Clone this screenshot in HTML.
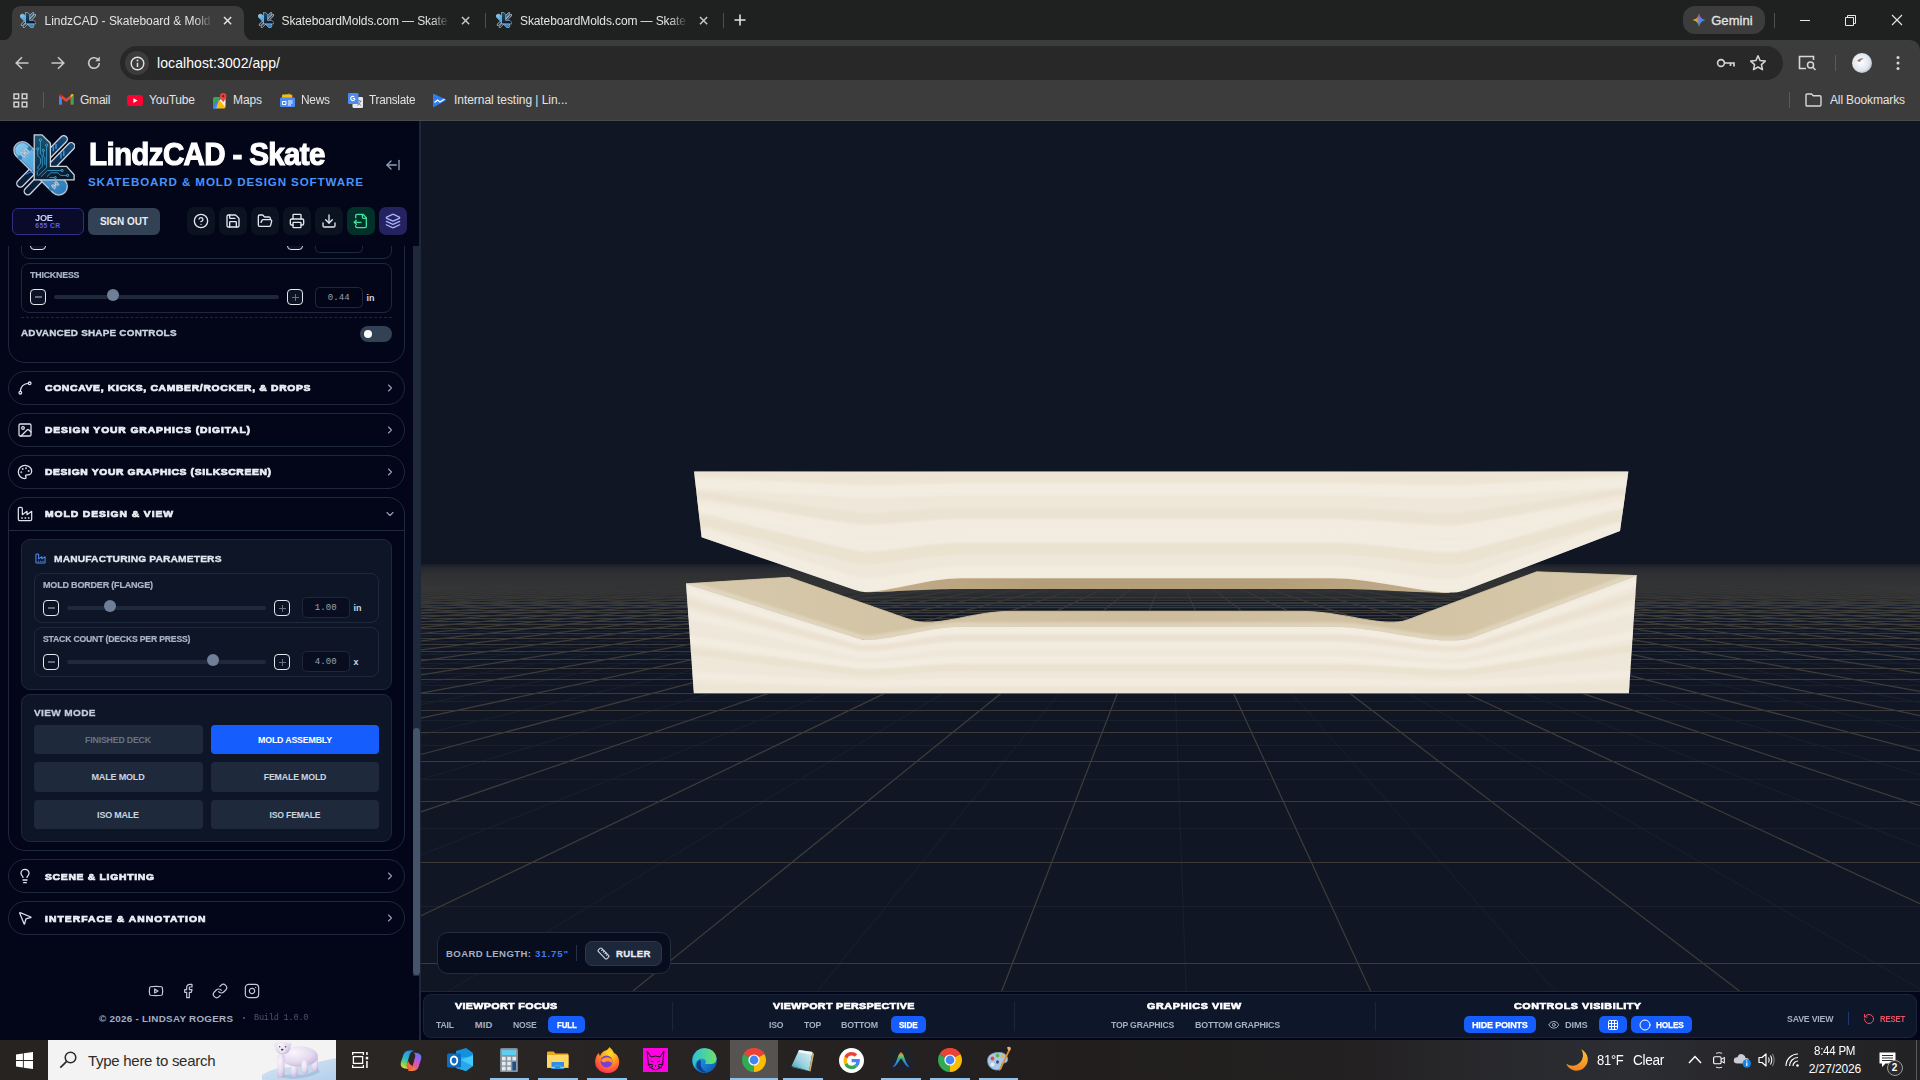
<!DOCTYPE html>
<html lang="en"><head><meta charset="utf-8"><title>LindzCAD - Skateboard &amp; Mold Design</title>
<style>
*{box-sizing:border-box;margin:0;padding:0}
html,body{width:1920px;height:1080px;overflow:hidden;background:#101624;font-family:"Liberation Sans",sans-serif}
.b{position:absolute;display:block}
.t{position:absolute;white-space:nowrap;display:block}
#root{position:relative;width:1920px;height:1080px;overflow:hidden}
</style></head>
<body><div id="root">
<div class="b" style="left:421px;top:120px;width:1499px;height:871px;background:#101624;"></div>
<svg class="b" style="left:0;top:0" width="1920" height="1080" viewBox="0 0 1920 1080"><defs><linearGradient id="haze" x1="0" y1="0" x2="0" y2="1"><stop offset="0" stop-color="#101624" stop-opacity=".8"/><stop offset=".08" stop-color="#101624" stop-opacity=".5"/><stop offset=".22" stop-color="#101624" stop-opacity=".3"/><stop offset=".5" stop-color="#101624" stop-opacity=".18"/><stop offset="1" stop-color="#101624" stop-opacity="0"/></linearGradient><linearGradient id="tanL" x1="0" y1="0" x2="1" y2="0"><stop offset="0" stop-color="#d6c8ab"/><stop offset=".22" stop-color="#d3c4a5"/><stop offset=".5" stop-color="#cdbd9e"/><stop offset=".78" stop-color="#d3c4a5"/><stop offset="1" stop-color="#d6c8ab"/></linearGradient><linearGradient id="tanU" x1="0" y1="0" x2="1" y2="0"><stop offset="0" stop-color="#c4ad8a"/><stop offset=".3" stop-color="#b59e7a"/><stop offset=".7" stop-color="#b59e7a"/><stop offset="1" stop-color="#c4ad8a"/></linearGradient><filter id="bl" x="-2%" y="-10%" width="104%" height="120%"><feGaussianBlur stdDeviation="1.3"/></filter><clipPath id="cU"><path d="M694 471.6L1628.4 471.6L1620 531.1 L1620 531.1 L1466 590 C1460 592.3 1455 592.6 1449 592.6 C1420 592 1370 578.2 1332 578.2 L961 578.2 C930 578.2 890 591.5 866 591.9 C861 591.9 858 591 852 588.9 L701.6 537.3 Z"/></clipPath><clipPath id="cL"><path d="M686 583.8 L852 636.6 C858 638.5 861 640 866 640 C890 640 930 626.7 961 626.7 L1334 626.7 C1370 626.7 1420 640.5 1449 640.5 C1458 640.5 1465 640.4 1472 637.8 L1636.7 575.6 L1628.9 693.3L693.8 693.3Z"/></clipPath></defs><path d="M421 906.5H1920M421 828.5H1920M421 779.5H1920M421 745.5H1920M421 720.5H1920M421 701.5H1920M421 685.5H1920M421 673.5H1920M421 663.5H1920M421 654.5H1920M421 647.5H1920M421 641.5H1920M421 635.5H1920M421 631.5H1920M421 626.5H1920M421 623.5H1920M421 619.5H1920M421 616.5H1920M421 613.5H1920M421 611.5H1920M421 608.5H1920M421 606.5H1920M421 604.5H1920M421 602.5H1920M421 601.2H1920M421 599.7H1920M421 598.2H1920M421 596.8H1920M421 595.6H1920M421 594.4H1920M421 593.2H1920M421 592.2H1920M421 591.1H1920M421 590.2H1920M421 589.3H1920M421 588.4H1920M421 587.6H1920M421 586.9H1920M421 586.1H1920M421 585.4H1920M421 584.8H1920M421 584.1H1920M421 583.5H1920M421 582.9H1920M421 582.4H1920M421 581.8H1920M421 581.3H1920M421 580.8H1920M421 580.4H1920M421 579.9H1920M421 579.5H1920M421 579H1920M421 578.6H1920M421 578.2H1920M421 577.9H1920M421 577.5H1920M421 577.1H1920M421 576.8H1920M421 576.5H1920M421 576.1H1920M421 575.8H1920M421 575.5H1920M421 575.2H1920M421 575H1920M421 574.7H1920M421 574.4H1920M421 574.2H1920M421 573.9H1920M421 573.7H1920M421 573.4H1920M421 573.2H1920M421 573H1920M421 572.7H1920M421 572.5H1920M421 572.3H1920M421 572.1H1920M421 571.9H1920M421 571.7H1920M421 571.5H1920M421 571.4H1920M421 571.2H1920M421 571H1920M421 570.8H1920M421 570.7H1920M421 570.5H1920M421 570.3H1920M421 570.2H1920M421 570H1920M421 569.9H1920M421 569.7H1920M421 569.6H1920M421 569.5H1920M421 569.3H1920M421 569.2H1920M421 569.1H1920M421 568.9H1920M421 568.8H1920M421 568.7H1920M421 568.6H1920M421 568.4H1920M421 568.3H1920M421 568.2H1920M421 568.1H1920M421 568H1920M421 567.9H1920M421 567.8H1920M421 567.7H1920M421 567.6H1920M421 567.5H1920M421 567.4H1920M421 567.3H1920M421 567.2H1920M421 567.1H1920M421 567H1920M421 566.9H1920M421 566.8H1920M421 566.7H1920M421 566.6H1920M421 566.6H1920M421 566.5H1920M421 566.4H1920M421 566.3H1920M421 566.2H1920M421 566.2H1920M421 566.1H1920M421 566H1920M421 565.9H1920M421 565.9H1920M421 565.8H1920M421 565.7H1920M421 565.6H1920M421 565.6H1920M421 565.5H1920M421 565.4H1920M421 565.4H1920M421 565.3H1920M421 565.2H1920M421 565.2H1920M421 565.1H1920M421 565.1H1920M421 565H1920M421 564.9H1920M421 564.9H1920M421 564.8H1920M421 564.8H1920M421 564.7H1920M424.1 564.7L421 564.7M431.2 564.7L421 564.8M438.2 564.7L421 564.9M445.2 564.7L421 565M452.3 564.7L421 565.1M459.3 564.7L421 565.1M466.4 564.7L421 565.2M473.4 564.7L421 565.3M480.5 564.7L421 565.4M487.5 564.7L421 565.5M494.6 564.7L421 565.6M501.6 564.7L421 565.7M508.6 564.7L421 565.8M515.7 564.7L421 565.9M522.7 564.7L421 566M529.8 564.7L421 566.1M536.8 564.7L421 566.2M543.9 564.7L421 566.3M550.9 564.7L421 566.4M558 564.7L421 566.6M565 564.7L421 566.7M572 564.7L421 566.8M579.1 564.7L421 566.9M586.1 564.7L421 567M593.2 564.7L421 567.2M600.2 564.7L421 567.3M607.3 564.7L421 567.4M614.3 564.7L421 567.6M621.4 564.7L421 567.7M628.4 564.7L421 567.9M635.4 564.7L421 568M642.5 564.7L421 568.2M649.5 564.7L421 568.3M656.6 564.7L421 568.5M663.6 564.7L421 568.7M670.7 564.7L421 568.8M677.7 564.7L421 569M684.7 564.7L421 569.2M691.8 564.7L421 569.4M698.8 564.7L421 569.6M705.9 564.7L421 569.8M712.9 564.7L421 570M720 564.7L421 570.2M727 564.7L421 570.4M734.1 564.7L421 570.7M741.1 564.7L421 570.9M748.1 564.7L421 571.1M755.2 564.7L421 571.4M762.2 564.7L421 571.6M769.3 564.7L421 571.9M776.3 564.7L421 572.2M783.4 564.7L421 572.5M790.4 564.7L421 572.8M797.5 564.7L421 573.1M804.5 564.7L421 573.4M811.5 564.7L421 573.7M818.6 564.7L421 574.1M825.6 564.7L421 574.4M832.7 564.7L421 574.8M839.7 564.7L421 575.2M846.8 564.7L421 575.6M853.8 564.7L421 576M860.9 564.7L421 576.5M867.9 564.7L421 577M874.9 564.7L421 577.4M882 564.7L421 578M889 564.7L421 578.5M896.1 564.7L421 579.1M903.1 564.7L421 579.7M910.2 564.7L421 580.3M917.2 564.7L421 581M924.3 564.7L421 581.7M931.3 564.7L421 582.4M938.3 564.7L421 583.2M945.4 564.7L421 584M952.4 564.7L421 584.9M959.5 564.7L421 585.9M966.5 564.7L421 586.9M973.6 564.7L421 588M980.6 564.7L421 589.2M987.6 564.7L421 590.4M994.7 564.7L421 591.8M1001.7 564.7L421 593.3M1008.8 564.7L421 594.9M1015.8 564.7L421 596.6M1022.9 564.7L421 598.5M1029.9 564.7L421 600.6M1037 564.7L421 603M1044 564.7L421 605.6M1051 564.7L421 608.5M1058.1 564.7L421 611.7M1065.1 564.7L421 615.4M1072.2 564.7L421 619.7M1079.2 564.7L421 624.6M1086.3 564.7L421 630.3M1093.3 564.7L421 637M1100.4 564.7L421 645.1M1107.4 564.7L421 655M1114.4 564.7L421 667.4M1121.5 564.7L421 683.3M1128.5 564.7L421 704.6M1135.6 564.7L421 734.5M1142.6 564.7L421 779.5M1149.7 564.7L421 855M1156.7 564.7L448.5 991M1163.8 564.7L817.3 991M1170.8 564.7L1186.1 991M1177.8 564.7L1555 991M1184.9 564.7L1920 988.8M1191.9 564.7L1920 846.7M1199 564.7L1920 774.9M1206 564.7L1920 731.5M1213.1 564.7L1920 702.6M1220.1 564.7L1920 681.8M1227.2 564.7L1920 666.2M1234.2 564.7L1920 654.1M1241.2 564.7L1920 644.3M1248.3 564.7L1920 636.4M1255.3 564.7L1920 629.7M1262.4 564.7L1920 624.1M1269.4 564.7L1920 619.3M1276.5 564.7L1920 615.1M1283.5 564.7L1920 611.4M1290.6 564.7L1920 608.2M1297.6 564.7L1920 605.3M1304.6 564.7L1920 602.8M1311.7 564.7L1920 600.5M1318.7 564.7L1920 598.4M1325.8 564.7L1920 596.5M1332.8 564.7L1920 594.7M1339.9 564.7L1920 593.1M1346.9 564.7L1920 591.7M1353.9 564.7L1920 590.3M1361 564.7L1920 589.1M1368 564.7L1920 587.9M1375.1 564.7L1920 586.8M1382.1 564.7L1920 585.8M1389.2 564.7L1920 584.8M1396.2 564.7L1920 584M1403.3 564.7L1920 583.1M1410.3 564.7L1920 582.3M1417.3 564.7L1920 581.6M1424.4 564.7L1920 580.9M1431.4 564.7L1920 580.2M1438.5 564.7L1920 579.6M1445.5 564.7L1920 579M1452.6 564.7L1920 578.5M1459.6 564.7L1920 577.9M1466.7 564.7L1920 577.4M1473.7 564.7L1920 576.9M1480.7 564.7L1920 576.5M1487.8 564.7L1920 576M1494.8 564.7L1920 575.6M1501.9 564.7L1920 575.2M1508.9 564.7L1920 574.8M1516 564.7L1920 574.4M1523 564.7L1920 574M1530.1 564.7L1920 573.7M1537.1 564.7L1920 573.4M1544.1 564.7L1920 573M1551.2 564.7L1920 572.7M1558.2 564.7L1920 572.4M1565.3 564.7L1920 572.2M1572.3 564.7L1920 571.9M1579.4 564.7L1920 571.6M1586.4 564.7L1920 571.4M1593.5 564.7L1920 571.1M1600.5 564.7L1920 570.9M1607.5 564.7L1920 570.6M1614.6 564.7L1920 570.4M1621.6 564.7L1920 570.2M1628.7 564.7L1920 570M1635.7 564.7L1920 569.8M1642.8 564.7L1920 569.6M1649.8 564.7L1920 569.4M1656.8 564.7L1920 569.2M1663.9 564.7L1920 569M1670.9 564.7L1920 568.8M1678 564.7L1920 568.7M1685 564.7L1920 568.5M1692.1 564.7L1920 568.3M1699.1 564.7L1920 568.2M1706.2 564.7L1920 568M1713.2 564.7L1920 567.9M1720.2 564.7L1920 567.7M1727.3 564.7L1920 567.6M1734.3 564.7L1920 567.4M1741.4 564.7L1920 567.3M1748.4 564.7L1920 567.2M1755.5 564.7L1920 567M1762.5 564.7L1920 566.9M1769.6 564.7L1920 566.8M1776.6 564.7L1920 566.7M1783.6 564.7L1920 566.5M1790.7 564.7L1920 566.4M1797.7 564.7L1920 566.3M1804.8 564.7L1920 566.2M1811.8 564.7L1920 566.1M1818.9 564.7L1920 566M1825.9 564.7L1920 565.9M1833 564.7L1920 565.8M1840 564.7L1920 565.7M1847 564.7L1920 565.6M1854.1 564.7L1920 565.5M1861.1 564.7L1920 565.4M1868.2 564.7L1920 565.3M1875.2 564.7L1920 565.2M1882.3 564.7L1920 565.1M1889.3 564.7L1920 565.1M1896.4 564.7L1920 565M1903.4 564.7L1920 564.9M1910.4 564.7L1920 564.8M1917.5 564.7L1920 564.7" stroke="#1a212d" stroke-width="1" fill="none"/><path d="M421 963.5H1920M421 862.5H1920M421 801.5H1920M421 761.5H1920M421 732.5H1920M421 710.5H1920M421 693.5H1920M421 679.5H1920M421 668.5H1920M421 659.5H1920M421 651.5H1920M421 644.5H1920M421 638.5H1920M421 633.5H1920M421 628.5H1920M421 624.5H1920M421 621.5H1920M421 618.5H1920M421 615.5H1920M421 612.5H1920M421 610.5H1920M421 607.5H1920M421 605.5H1920M421 603.5H1920M421 602.5H1920M421 600.4H1920M421 598.9H1920M421 597.5H1920M421 596.2H1920M421 594.9H1920M421 593.8H1920M421 592.7H1920M421 591.6H1920M421 590.7H1920M421 589.7H1920M421 588.9H1920M421 588H1920M421 587.2H1920M421 586.5H1920M421 585.8H1920M421 585.1H1920M421 584.4H1920M421 583.8H1920M421 583.2H1920M421 582.7H1920M421 582.1H1920M421 581.6H1920M421 581.1H1920M421 580.6H1920M421 580.1H1920M421 579.7H1920M421 579.3H1920M421 578.8H1920M421 578.4H1920M421 578H1920M421 577.7H1920M421 577.3H1920M421 577H1920M421 576.6H1920M421 576.3H1920M421 576H1920M421 575.7H1920M421 575.4H1920M421 575.1H1920M421 574.8H1920M421 574.5H1920M421 574.3H1920M421 574H1920M421 573.8H1920M421 573.5H1920M421 573.3H1920M421 573.1H1920M421 572.9H1920M421 572.6H1920M421 572.4H1920M421 572.2H1920M421 572H1920M421 571.8H1920M421 571.6H1920M421 571.5H1920M421 571.3H1920M421 571.1H1920M421 570.9H1920M421 570.8H1920M421 570.6H1920M421 570.4H1920M421 570.3H1920M421 570.1H1920M421 570H1920M421 569.8H1920M421 569.7H1920M421 569.5H1920M421 569.4H1920M421 569.3H1920M421 569.1H1920M421 569H1920M421 568.9H1920M421 568.7H1920M421 568.6H1920M421 568.5H1920M421 568.4H1920M421 568.3H1920M421 568.2H1920M421 568H1920M421 567.9H1920M421 567.8H1920M421 567.7H1920M421 567.6H1920M421 567.5H1920M421 567.4H1920M421 567.3H1920M421 567.2H1920M421 567.1H1920M421 567H1920M421 566.9H1920M421 566.9H1920M421 566.8H1920M421 566.7H1920M421 566.6H1920M421 566.5H1920M421 566.4H1920M421 566.4H1920M421 566.3H1920M421 566.2H1920M421 566.1H1920M421 566H1920M421 566H1920M421 565.9H1920M421 565.8H1920M421 565.8H1920M421 565.7H1920M421 565.6H1920M421 565.5H1920M421 565.5H1920M421 565.4H1920M421 565.3H1920M421 565.3H1920M421 565.2H1920M421 565.2H1920M421 565.1H1920M421 565H1920M421 565H1920M421 564.9H1920M421 564.9H1920M421 564.8H1920M421 564.7H1920" stroke="#3b3a38" stroke-width="1" fill="none"/><path d="M420.6 564.7L421 564.7M427.6 564.7L421 564.8M434.7 564.7L421 564.9M441.7 564.7L421 564.9M448.8 564.7L421 565M455.8 564.7L421 565.1M462.9 564.7L421 565.2M469.9 564.7L421 565.3M476.9 564.7L421 565.4M484 564.7L421 565.5M491 564.7L421 565.6M498.1 564.7L421 565.7M505.1 564.7L421 565.7M512.2 564.7L421 565.8M519.2 564.7L421 566M526.3 564.7L421 566.1M533.3 564.7L421 566.2M540.3 564.7L421 566.3M547.4 564.7L421 566.4M554.4 564.7L421 566.5M561.5 564.7L421 566.6M568.5 564.7L421 566.7M575.6 564.7L421 566.9M582.6 564.7L421 567M589.7 564.7L421 567.1M596.7 564.7L421 567.2M603.7 564.7L421 567.4M610.8 564.7L421 567.5M617.8 564.7L421 567.7M624.9 564.7L421 567.8M631.9 564.7L421 568M639 564.7L421 568.1M646 564.7L421 568.3M653 564.7L421 568.4M660.1 564.7L421 568.6M667.1 564.7L421 568.8M674.2 564.7L421 568.9M681.2 564.7L421 569.1M688.3 564.7L421 569.3M695.3 564.7L421 569.5M702.4 564.7L421 569.7M709.4 564.7L421 569.9M716.4 564.7L421 570.1M723.5 564.7L421 570.3M730.5 564.7L421 570.5M737.6 564.7L421 570.8M744.6 564.7L421 571M751.7 564.7L421 571.3M758.7 564.7L421 571.5M765.8 564.7L421 571.8M772.8 564.7L421 572M779.8 564.7L421 572.3M786.9 564.7L421 572.6M793.9 564.7L421 572.9M801 564.7L421 573.2M808 564.7L421 573.6M815.1 564.7L421 573.9M822.1 564.7L421 574.3M829.2 564.7L421 574.6M836.2 564.7L421 575M843.2 564.7L421 575.4M850.3 564.7L421 575.8M857.3 564.7L421 576.3M864.4 564.7L421 576.7M871.4 564.7L421 577.2M878.5 564.7L421 577.7M885.5 564.7L421 578.2M892.6 564.7L421 578.8M899.6 564.7L421 579.4M906.6 564.7L421 580M913.7 564.7L421 580.6M920.7 564.7L421 581.3M927.8 564.7L421 582M934.8 564.7L421 582.8M941.9 564.7L421 583.6M948.9 564.7L421 584.5M956 564.7L421 585.4M963 564.7L421 586.4M970 564.7L421 587.4M977.1 564.7L421 588.6M984.1 564.7L421 589.8M991.2 564.7L421 591.1M998.2 564.7L421 592.5M1005.3 564.7L421 594M1012.3 564.7L421 595.7M1019.3 564.7L421 597.6M1026.4 564.7L421 599.6M1033.4 564.7L421 601.8M1040.5 564.7L421 604.2M1047.5 564.7L421 607M1054.6 564.7L421 610.1M1061.6 564.7L421 613.5M1068.7 564.7L421 617.5M1075.7 564.7L421 622M1082.7 564.7L421 627.3M1089.8 564.7L421 633.5M1096.8 564.7L421 640.8M1103.9 564.7L421 649.8M1110.9 564.7L421 660.8M1118 564.7L421 674.8M1125 564.7L421 693.2M1132.1 564.7L421 718.2M1139.1 564.7L421 754.5M1146.1 564.7L421 811.8M1153.2 564.7L421 915.7M1160.2 564.7L632.9 991M1167.3 564.7L1001.7 991M1174.3 564.7L1370.6 991M1181.4 564.7L1739.4 991M1188.4 564.7L1920 903.8M1195.5 564.7L1920 805.7M1202.5 564.7L1920 750.8M1209.5 564.7L1920 715.7M1216.6 564.7L1920 691.4M1223.6 564.7L1920 673.5M1230.7 564.7L1920 659.8M1237.7 564.7L1920 648.9M1244.8 564.7L1920 640.2M1251.8 564.7L1920 632.9M1258.9 564.7L1920 626.8M1265.9 564.7L1920 621.6M1272.9 564.7L1920 617.1M1280 564.7L1920 613.2M1287 564.7L1920 609.8M1294.1 564.7L1920 606.7M1301.1 564.7L1920 604M1308.2 564.7L1920 601.6M1315.2 564.7L1920 599.4M1322.2 564.7L1920 597.4M1329.3 564.7L1920 595.6M1336.3 564.7L1920 593.9M1343.4 564.7L1920 592.4M1350.4 564.7L1920 591M1357.5 564.7L1920 589.7M1364.5 564.7L1920 588.5M1371.6 564.7L1920 587.3M1378.6 564.7L1920 586.3M1385.6 564.7L1920 585.3M1392.7 564.7L1920 584.4M1399.7 564.7L1920 583.5M1406.8 564.7L1920 582.7M1413.8 564.7L1920 582M1420.9 564.7L1920 581.2M1427.9 564.7L1920 580.6M1435 564.7L1920 579.9M1442 564.7L1920 579.3M1449 564.7L1920 578.7M1456.1 564.7L1920 578.2M1463.1 564.7L1920 577.7M1470.2 564.7L1920 577.2M1477.2 564.7L1920 576.7M1484.3 564.7L1920 576.2M1491.3 564.7L1920 575.8M1498.4 564.7L1920 575.4M1505.4 564.7L1920 575M1512.4 564.7L1920 574.6M1519.5 564.7L1920 574.2M1526.5 564.7L1920 573.9M1533.6 564.7L1920 573.5M1540.6 564.7L1920 573.2M1547.7 564.7L1920 572.9M1554.7 564.7L1920 572.6M1561.8 564.7L1920 572.3M1568.8 564.7L1920 572M1575.8 564.7L1920 571.7M1582.9 564.7L1920 571.5M1589.9 564.7L1920 571.2M1597 564.7L1920 571M1604 564.7L1920 570.7M1611.1 564.7L1920 570.5M1618.1 564.7L1920 570.3M1625.2 564.7L1920 570.1M1632.2 564.7L1920 569.9M1639.2 564.7L1920 569.7M1646.3 564.7L1920 569.5M1653.3 564.7L1920 569.3M1660.4 564.7L1920 569.1M1667.4 564.7L1920 568.9M1674.5 564.7L1920 568.7M1681.5 564.7L1920 568.6M1688.5 564.7L1920 568.4M1695.6 564.7L1920 568.2M1702.6 564.7L1920 568.1M1709.7 564.7L1920 567.9M1716.7 564.7L1920 567.8M1723.8 564.7L1920 567.6M1730.8 564.7L1920 567.5M1737.9 564.7L1920 567.4M1744.9 564.7L1920 567.2M1751.9 564.7L1920 567.1M1759 564.7L1920 567M1766 564.7L1920 566.8M1773.1 564.7L1920 566.7M1780.1 564.7L1920 566.6M1787.2 564.7L1920 566.5M1794.2 564.7L1920 566.4M1801.3 564.7L1920 566.3M1808.3 564.7L1920 566.2M1815.3 564.7L1920 566M1822.4 564.7L1920 565.9M1829.4 564.7L1920 565.8M1836.5 564.7L1920 565.7M1843.5 564.7L1920 565.6M1850.6 564.7L1920 565.5M1857.6 564.7L1920 565.5M1864.7 564.7L1920 565.4M1871.7 564.7L1920 565.3M1878.7 564.7L1920 565.2M1885.8 564.7L1920 565.1M1892.8 564.7L1920 565M1899.9 564.7L1920 564.9M1906.9 564.7L1920 564.8M1914 564.7L1920 564.8M1921 564.7L1920 564.7" stroke="#3d3c39" stroke-width="1.25" fill="none"/><rect x="421" y="564" width="1499" height="50" fill="url(#haze)"/><path d="M686 583.8L788.9 577.3 L910 619.7 C917 622.1 922 622.2 928.5 622.2 C950 622.2 980 611.4 1009 611.4 L1303 611.4 C1335 611.4 1368 622.2 1390 622.2 C1396 622.2 1401 622.2 1408 619.7 L1536.7 571.8 L1636.7 575.6 L1636.7 575.6 L1472 637.8 C1465 640.4 1458 640.5 1449 640.5 C1420 640.5 1370 626.7 1334 626.7 L961 626.7 C930 626.7 890 640 866 640 C861 640 858 638.5 852 636.6 L686 583.8 Z" fill="url(#tanL)" stroke="#d3c4a6" stroke-width=".9"/><clipPath id="cT"><path d="M686 583.8L788.9 577.3 L910 619.7 C917 622.1 922 622.2 928.5 622.2 C950 622.2 980 611.4 1009 611.4 L1303 611.4 C1335 611.4 1368 622.2 1390 622.2 C1396 622.2 1401 622.2 1408 619.7 L1536.7 571.8 L1636.7 575.6 L1636.7 575.6 L1472 637.8 C1465 640.4 1458 640.5 1449 640.5 C1420 640.5 1370 626.7 1334 626.7 L961 626.7 C930 626.7 890 640 866 640 C861 640 858 638.5 852 636.6 L686 583.8 Z"/></clipPath><g clip-path="url(#cT)"><path d="M686 583.8 L852 636.6 C858 638.5 861 640 866 640 C890 640 930 626.7 961 626.7 L1334 626.7 C1370 626.7 1420 640.5 1449 640.5 C1458 640.5 1465 640.4 1472 637.8 L1636.7 575.6" stroke="#e9e0cc" stroke-opacity=".55" stroke-width="9" fill="none" filter="url(#bl)"/></g><path d="M686 583.8 L852 636.6 C858 638.5 861 640 866 640 C890 640 930 626.7 961 626.7 L1334 626.7 C1370 626.7 1420 640.5 1449 640.5 C1458 640.5 1465 640.4 1472 637.8 L1636.7 575.6 L1628.9 693.3L693.8 693.3Z" fill="#efe8da"/><g clip-path="url(#cL)"><g filter="url(#bl)"><path d="M686 589.9L701.8 594.6L717.7 599.4L733.5 604.2L749.4 608.9L765.2 613.7L781.1 618.4L796.9 623.2L812.8 628L828.6 632.7L844.5 637.5L860.3 642.3L876.1 642.4L892 640.1L907.8 637.2L923.7 634.4L939.5 632L955.4 630.6L971.2 630.4L987.1 630.4L1002.9 630.4L1018.7 630.4L1034.6 630.4L1050.4 630.4L1066.3 630.4L1082.1 630.4L1098 630.4L1113.8 630.4L1129.7 630.4L1145.5 630.4L1161.3 630.4L1177.2 630.4L1193 630.4L1208.9 630.4L1224.7 630.4L1240.6 630.4L1256.4 630.4L1272.3 630.4L1288.1 630.4L1304 630.4L1319.8 630.4L1335.6 630.4L1351.5 631.2L1367.3 633L1383.2 635.2L1399 637.7L1414.9 640.1L1430.7 642.2L1446.6 643.4L1462.4 643L1478.2 638.7L1494.1 633L1509.9 627.4L1525.8 621.7L1541.6 616L1557.5 610.4L1573.3 604.7L1589.2 599.1L1605 593.4L1620.9 587.8L1636.7 582.1" stroke="#f6f0e6" stroke-opacity="0.55" stroke-width="7.4" fill="none"/><path d="M686 602L701.8 606.2L717.7 610.4L733.5 614.6L749.4 618.8L765.2 623L781.1 627.2L796.9 631.4L812.8 635.6L828.6 639.8L844.5 644L860.3 648.3L876.1 648.4L892 646.4L907.8 643.8L923.7 641.3L939.5 639.2L955.4 637.9L971.2 637.8L987.1 637.8L1002.9 637.8L1018.7 637.8L1034.6 637.8L1050.4 637.8L1066.3 637.8L1082.1 637.8L1098 637.8L1113.8 637.8L1129.7 637.8L1145.5 637.8L1161.3 637.8L1177.2 637.8L1193 637.8L1208.9 637.8L1224.7 637.8L1240.6 637.8L1256.4 637.8L1272.3 637.8L1288.1 637.8L1304 637.8L1319.8 637.8L1335.6 637.8L1351.5 638.5L1367.3 640.1L1383.2 642.1L1399 644.2L1414.9 646.4L1430.7 648.2L1446.6 649.2L1462.4 648.9L1478.2 645.1L1494.1 640.1L1509.9 635.1L1525.8 630.1L1541.6 625.1L1557.5 620.1L1573.3 615.2L1589.2 610.2L1605 605.2L1620.9 600.2L1636.7 595.2" stroke="#e9dfcc" stroke-opacity="0.55" stroke-width="7.4" fill="none"/><path d="M686 614.2L701.8 617.9L717.7 621.5L733.5 625.1L749.4 628.8L765.2 632.4L781.1 636.1L796.9 639.7L812.8 643.3L828.6 647L844.5 650.6L860.3 654.3L876.1 654.3L892 652.6L907.8 650.4L923.7 648.2L939.5 646.4L955.4 645.3L971.2 645.2L987.1 645.2L1002.9 645.2L1018.7 645.2L1034.6 645.2L1050.4 645.2L1066.3 645.2L1082.1 645.2L1098 645.2L1113.8 645.2L1129.7 645.2L1145.5 645.2L1161.3 645.2L1177.2 645.2L1193 645.2L1208.9 645.2L1224.7 645.2L1240.6 645.2L1256.4 645.2L1272.3 645.2L1288.1 645.2L1304 645.2L1319.8 645.2L1335.6 645.2L1351.5 645.8L1367.3 647.2L1383.2 648.9L1399 650.8L1414.9 652.6L1430.7 654.2L1446.6 655.1L1462.4 654.8L1478.2 651.5L1494.1 647.2L1509.9 642.9L1525.8 638.5L1541.6 634.2L1557.5 629.9L1573.3 625.6L1589.2 621.3L1605 616.9L1620.9 612.6L1636.7 608.3" stroke="#f4eee3" stroke-opacity="0.55" stroke-width="7.4" fill="none"/><path d="M686 638.5L701.8 641.1L717.7 643.6L733.5 646.1L749.4 648.6L765.2 651.1L781.1 653.7L796.9 656.2L812.8 658.7L828.6 661.2L844.5 663.7L860.3 666.3L876.1 666.3L892 665.1L907.8 663.6L923.7 662.1L939.5 660.8L955.4 660.1L971.2 660L987.1 660L1002.9 660L1018.7 660L1034.6 660L1050.4 660L1066.3 660L1082.1 660L1098 660L1113.8 660L1129.7 660L1145.5 660L1161.3 660L1177.2 660L1193 660L1208.9 660L1224.7 660L1240.6 660L1256.4 660L1272.3 660L1288.1 660L1304 660L1319.8 660L1335.6 660L1351.5 660.4L1367.3 661.4L1383.2 662.6L1399 663.9L1414.9 665.1L1430.7 666.3L1446.6 666.9L1462.4 666.7L1478.2 664.4L1494.1 661.4L1509.9 658.4L1525.8 655.4L1541.6 652.4L1557.5 649.4L1573.3 646.4L1589.2 643.4L1605 640.4L1620.9 637.4L1636.7 634.5" stroke="#f6f0e6" stroke-opacity="0.55" stroke-width="7.4" fill="none"/><path d="M686 650.7L701.8 652.7L717.7 654.6L733.5 656.6L749.4 658.6L765.2 660.5L781.1 662.5L796.9 664.4L812.8 666.4L828.6 668.4L844.5 670.3L860.3 672.3L876.1 672.3L892 671.4L907.8 670.2L923.7 669L939.5 668L955.4 667.5L971.2 667.4L987.1 667.4L1002.9 667.4L1018.7 667.4L1034.6 667.4L1050.4 667.4L1066.3 667.4L1082.1 667.4L1098 667.4L1113.8 667.4L1129.7 667.4L1145.5 667.4L1161.3 667.4L1177.2 667.4L1193 667.4L1208.9 667.4L1224.7 667.4L1240.6 667.4L1256.4 667.4L1272.3 667.4L1288.1 667.4L1304 667.4L1319.8 667.4L1335.6 667.4L1351.5 667.7L1367.3 668.5L1383.2 669.4L1399 670.4L1414.9 671.4L1430.7 672.3L1446.6 672.7L1462.4 672.6L1478.2 670.8L1494.1 668.5L1509.9 666.1L1525.8 663.8L1541.6 661.5L1557.5 659.2L1573.3 656.8L1589.2 654.5L1605 652.2L1620.9 649.9L1636.7 647.5" stroke="#e8dec9" stroke-opacity="0.55" stroke-width="7.4" fill="none"/><path d="M686 675L701.8 675.9L717.7 676.7L733.5 677.6L749.4 678.4L765.2 679.2L781.1 680.1L796.9 680.9L812.8 681.8L828.6 682.6L844.5 683.4L860.3 684.3L876.1 684.3L892 683.9L907.8 683.4L923.7 682.9L939.5 682.5L955.4 682.2L971.2 682.2L987.1 682.2L1002.9 682.2L1018.7 682.2L1034.6 682.2L1050.4 682.2L1066.3 682.2L1082.1 682.2L1098 682.2L1113.8 682.2L1129.7 682.2L1145.5 682.2L1161.3 682.2L1177.2 682.2L1193 682.2L1208.9 682.2L1224.7 682.2L1240.6 682.2L1256.4 682.2L1272.3 682.2L1288.1 682.2L1304 682.2L1319.8 682.2L1335.6 682.2L1351.5 682.3L1367.3 682.7L1383.2 683.1L1399 683.5L1414.9 683.9L1430.7 684.3L1446.6 684.5L1462.4 684.4L1478.2 683.7L1494.1 682.7L1509.9 681.7L1525.8 680.7L1541.6 679.7L1557.5 678.7L1573.3 677.7L1589.2 676.7L1605 675.7L1620.9 674.7L1636.7 673.7" stroke="#f5efe4" stroke-opacity="0.55" stroke-width="7.4" fill="none"/><path d="M686 687.2L701.8 687.5L717.7 687.8L733.5 688.1L749.4 688.3L765.2 688.6L781.1 688.9L796.9 689.2L812.8 689.5L828.6 689.7L844.5 690L860.3 690.3L876.1 690.3L892 690.2L907.8 690L923.7 689.8L939.5 689.7L955.4 689.6L971.2 689.6L987.1 689.6L1002.9 689.6L1018.7 689.6L1034.6 689.6L1050.4 689.6L1066.3 689.6L1082.1 689.6L1098 689.6L1113.8 689.6L1129.7 689.6L1145.5 689.6L1161.3 689.6L1177.2 689.6L1193 689.6L1208.9 689.6L1224.7 689.6L1240.6 689.6L1256.4 689.6L1272.3 689.6L1288.1 689.6L1304 689.6L1319.8 689.6L1335.6 689.6L1351.5 689.6L1367.3 689.8L1383.2 689.9L1399 690L1414.9 690.2L1430.7 690.3L1446.6 690.4L1462.4 690.3L1478.2 690.1L1494.1 689.8L1509.9 689.4L1525.8 689.1L1541.6 688.8L1557.5 688.4L1573.3 688.1L1589.2 687.8L1605 687.4L1620.9 687.1L1636.7 686.8" stroke="#ebe2d0" stroke-opacity="0.55" stroke-width="7.4" fill="none"/></g></g><path d="M864.7 592.3C890 591.8 930 588.9 957 588.9L1334 588.9C1370 588.9 1420 592.6 1449.5 593L1449.5 575L864.7 575Z" fill="url(#tanU)"/><path d="M694 471.6L1628.4 471.6L1620 531.1 L1620 531.1 L1466 590 C1460 592.3 1455 592.6 1449 592.6 C1420 592 1370 578.2 1332 578.2 L961 578.2 C930 578.2 890 591.5 866 591.9 C861 591.9 858 591 852 588.9 L701.6 537.3 Z" fill="#efe8da"/><g clip-path="url(#cU)"><g filter="url(#bl)"><path d="M694 475.2L709.6 475.4L725.1 475.7L740.7 476L756.3 476.3L771.9 476.6L787.4 476.9L803 477.2L818.6 477.5L834.2 477.8L849.7 478.1L865.3 478.3L880.9 478.2L896.5 478.1L912 477.9L927.6 477.7L943.2 477.6L958.7 477.5L974.3 477.5L989.9 477.5L1005.5 477.5L1021 477.5L1036.6 477.5L1052.2 477.5L1067.8 477.5L1083.3 477.5L1098.9 477.5L1114.5 477.5L1130.1 477.5L1145.6 477.5L1161.2 477.5L1176.8 477.5L1192.3 477.5L1207.9 477.5L1223.5 477.5L1239.1 477.5L1254.6 477.5L1270.2 477.5L1285.8 477.5L1301.4 477.5L1316.9 477.5L1332.5 477.5L1348.1 477.6L1363.7 477.7L1379.2 477.8L1394.8 477.9L1410.4 478.1L1425.9 478.2L1441.5 478.3L1457.1 478.3L1472.7 478L1488.2 477.7L1503.8 477.4L1519.4 477L1535 476.7L1550.5 476.4L1566.1 476.1L1581.7 475.7L1597.3 475.4L1612.8 475.1L1628.4 474.9" stroke="#ebe2d0" stroke-opacity="0.55" stroke-width="11.8" fill="none"/><path d="M694 482.6L709.6 483L725.1 483.9L740.7 484.8L756.3 485.7L771.9 486.6L787.4 487.5L803 488.3L818.6 489.2L834.2 490.1L849.7 491L865.3 491.6L880.9 491.4L896.5 491L912 490.4L927.6 490L943.2 489.6L958.7 489.4L974.3 489.4L989.9 489.4L1005.5 489.4L1021 489.4L1036.6 489.4L1052.2 489.4L1067.8 489.4L1083.3 489.4L1098.9 489.4L1114.5 489.4L1130.1 489.4L1145.6 489.4L1161.2 489.4L1176.8 489.4L1192.3 489.4L1207.9 489.4L1223.5 489.4L1239.1 489.4L1254.6 489.4L1270.2 489.4L1285.8 489.4L1301.4 489.4L1316.9 489.4L1332.5 489.4L1348.1 489.5L1363.7 489.8L1379.2 490.1L1394.8 490.6L1410.4 491L1425.9 491.4L1441.5 491.7L1457.1 491.7L1472.7 490.9L1488.2 489.9L1503.8 488.9L1519.4 487.9L1535 486.9L1550.5 485.9L1566.1 485L1581.7 484L1597.3 483L1612.8 482L1628.4 481.5" stroke="#f6f0e6" stroke-opacity="0.55" stroke-width="11.8" fill="none"/><path d="M694 497.1L709.6 498.2L725.1 500.3L740.7 502.4L756.3 504.4L771.9 506.5L787.4 508.6L803 510.7L818.6 512.8L834.2 514.8L849.7 516.9L865.3 518.4L880.9 517.8L896.5 516.8L912 515.6L927.6 514.4L943.2 513.5L958.7 513.1L974.3 513.1L989.9 513.1L1005.5 513.1L1021 513.1L1036.6 513.1L1052.2 513.1L1067.8 513.1L1083.3 513.1L1098.9 513.1L1114.5 513.1L1130.1 513.1L1145.6 513.1L1161.2 513.1L1176.8 513.1L1192.3 513.1L1207.9 513.1L1223.5 513.1L1239.1 513.1L1254.6 513.1L1270.2 513.1L1285.8 513.1L1301.4 513.1L1316.9 513.1L1332.5 513.1L1348.1 513.3L1363.7 514L1379.2 514.8L1394.8 515.8L1410.4 516.9L1425.9 517.8L1441.5 518.5L1457.1 518.5L1472.7 516.7L1488.2 514.3L1503.8 512L1519.4 509.7L1535 507.4L1550.5 505.1L1566.1 502.8L1581.7 500.4L1597.3 498.1L1612.8 495.8L1628.4 494.7" stroke="#e9dfcc" stroke-opacity="0.55" stroke-width="11.8" fill="none"/><path d="M694 504.4L709.6 505.8L725.1 508.5L740.7 511.2L756.3 513.8L771.9 516.5L787.4 519.2L803 521.8L818.6 524.5L834.2 527.2L849.7 529.9L865.3 531.7L880.9 531L896.5 529.7L912 528.1L927.6 526.7L943.2 525.5L958.7 524.9L974.3 524.9L989.9 524.9L1005.5 524.9L1021 524.9L1036.6 524.9L1052.2 524.9L1067.8 524.9L1083.3 524.9L1098.9 524.9L1114.5 524.9L1130.1 524.9L1145.6 524.9L1161.2 524.9L1176.8 524.9L1192.3 524.9L1207.9 524.9L1223.5 524.9L1239.1 524.9L1254.6 524.9L1270.2 524.9L1285.8 524.9L1301.4 524.9L1316.9 524.9L1332.5 524.9L1348.1 525.3L1363.7 526.1L1379.2 527.2L1394.8 528.5L1410.4 529.8L1425.9 531L1441.5 531.9L1457.1 531.9L1472.7 529.5L1488.2 526.5L1503.8 523.6L1519.4 520.6L1535 517.6L1550.5 514.6L1566.1 511.7L1581.7 508.7L1597.3 505.7L1612.8 502.7L1628.4 501.4" stroke="#f5efe4" stroke-opacity="0.55" stroke-width="11.8" fill="none"/><path d="M694 511.8L709.6 513.4L725.1 516.7L740.7 520L756.3 523.2L771.9 526.5L787.4 529.7L803 533L818.6 536.3L834.2 539.5L849.7 542.8L865.3 545.1L880.9 544.3L896.5 542.6L912 540.7L927.6 538.9L943.2 537.5L958.7 536.8L974.3 536.7L989.9 536.7L1005.5 536.7L1021 536.7L1036.6 536.7L1052.2 536.7L1067.8 536.7L1083.3 536.7L1098.9 536.7L1114.5 536.7L1130.1 536.7L1145.6 536.7L1161.2 536.7L1176.8 536.7L1192.3 536.7L1207.9 536.7L1223.5 536.7L1239.1 536.7L1254.6 536.7L1270.2 536.7L1285.8 536.7L1301.4 536.7L1316.9 536.7L1332.5 536.8L1348.1 537.2L1363.7 538.2L1379.2 539.5L1394.8 541.1L1410.4 542.7L1425.9 544.2L1441.5 545.3L1457.1 545.3L1472.7 542.4L1488.2 538.8L1503.8 535.1L1519.4 531.5L1535 527.8L1550.5 524.2L1566.1 520.6L1581.7 516.9L1597.3 513.3L1612.8 509.6L1628.4 508" stroke="#f4eee3" stroke-opacity="0.55" stroke-width="11.8" fill="none"/><path d="M694 519L709.6 521L725.1 524.9L740.7 528.7L756.3 532.6L771.9 536.5L787.4 540.3L803 544.2L818.6 548L834.2 551.9L849.7 555.8L865.3 558.5L880.9 557.5L896.5 555.5L912 553.3L927.6 551.1L943.2 549.5L958.7 548.6L974.3 548.6L989.9 548.6L1005.5 548.6L1021 548.6L1036.6 548.6L1052.2 548.6L1067.8 548.6L1083.3 548.6L1098.9 548.6L1114.5 548.6L1130.1 548.6L1145.6 548.6L1161.2 548.6L1176.8 548.6L1192.3 548.6L1207.9 548.6L1223.5 548.6L1239.1 548.6L1254.6 548.6L1270.2 548.6L1285.8 548.6L1301.4 548.6L1316.9 548.6L1332.5 548.6L1348.1 549.1L1363.7 550.3L1379.2 551.9L1394.8 553.7L1410.4 555.6L1425.9 557.4L1441.5 558.7L1457.1 558.7L1472.7 555.3L1488.2 551L1503.8 546.7L1519.4 542.4L1535 538.1L1550.5 533.8L1566.1 529.5L1581.7 525.2L1597.3 520.9L1612.8 516.6L1628.4 514.6" stroke="#e8dec9" stroke-opacity="0.55" stroke-width="11.8" fill="none"/><path d="M694 533.6L709.6 536.2L725.1 541.3L740.7 546.3L756.3 551.4L771.9 556.4L787.4 561.5L803 566.5L818.6 571.6L834.2 576.6L849.7 581.6L865.3 585.2L880.9 583.9L896.5 581.3L912 578.4L927.6 575.6L943.2 573.4L958.7 572.3L974.3 572.3L989.9 572.3L1005.5 572.3L1021 572.3L1036.6 572.3L1052.2 572.3L1067.8 572.3L1083.3 572.3L1098.9 572.3L1114.5 572.3L1130.1 572.3L1145.6 572.3L1161.2 572.3L1176.8 572.3L1192.3 572.3L1207.9 572.3L1223.5 572.3L1239.1 572.3L1254.6 572.3L1270.2 572.3L1285.8 572.3L1301.4 572.3L1316.9 572.3L1332.5 572.3L1348.1 572.9L1363.7 574.5L1379.2 576.6L1394.8 579L1410.4 581.5L1425.9 583.8L1441.5 585.5L1457.1 585.5L1472.7 581L1488.2 575.4L1503.8 569.8L1519.4 564.1L1535 558.5L1550.5 552.9L1566.1 547.3L1581.7 541.6L1597.3 536L1612.8 530.4L1628.4 527.8" stroke="#f6f0e6" stroke-opacity="0.55" stroke-width="11.8" fill="none"/></g></g></svg>
<div class="b" style="left:437px;top:932px;width:234px;height:42px;background:#080d1d;border:1px solid #222c3e;border-radius:11px;"></div>
<span class="t" id="t0" style="top:949.07px;font-size:9.6px;line-height:9.6px;color:#a3afc2;font-weight:700;letter-spacing:0.376px;left:446.00px;">BOARD LENGTH:</span>
<span class="t" id="t1" style="top:949.07px;font-size:9.6px;line-height:9.6px;color:#3d7bf2;font-weight:700;letter-spacing:0.887px;left:535.00px;">31.75"</span>
<div class="b" style="left:576px;top:945px;width:1px;height:16px;background:#253147;"></div>
<div class="b" style="left:585px;top:941px;width:77px;height:25px;background:#1c273a;border:1px solid #2a374e;border-radius:7px;"></div>
<svg class="b" style="left:596.5px;top:947px;" width="13" height="13" viewBox="0 0 24 24" fill="none" stroke="#cfd8e4" stroke-width="2" stroke-linecap="round" stroke-linejoin="round"><path d="M21.300 15.300a2.400 2.400 0 0 1 0 3.400l-2.600 2.600a2.400 2.400 0 0 1-3.400 0L2.700 8.700a2.410 2.410 0 0 1 0-3.400l2.600-2.600a2.410 2.410 0 0 1 3.400 0Z"/><path d="m14.500 12.500 2-2"/><path d="m11.500 9.500 2-2"/><path d="m8.500 6.500 2-2"/><path d="m17.500 15.500 2-2"/></svg>
<span class="t" id="t2" style="top:949.17px;font-size:9.6px;line-height:9.6px;color:#e8edf4;font-weight:700;letter-spacing:0.363px;left:616.00px;-webkit-text-stroke:0.3px #e8edf4;">RULER</span>
<div class="b" style="left:421px;top:991px;width:1499px;height:1.2px;background:#1c2739;"></div>
<div class="b" style="left:421px;top:992.2px;width:1499px;height:48px;background:#020618;"></div>
<div class="b" style="left:423px;top:994px;width:1494px;height:44px;background:#0e1629;border:1px solid #19243a;border-radius:8px;"></div>
<span class="t" id="t3" style="top:1001.27px;font-size:9.6px;line-height:9.6px;color:#ffffff;font-weight:700;letter-spacing:0.301px;left:455.20px;transform-origin:0 0;transform:scaleX(1.1200);-webkit-text-stroke:0.65px #fff;">VIEWPORT FOCUS</span>
<span class="t" id="t4" style="top:1019.66px;font-size:9.5px;line-height:9.5px;color:#a3afc2;font-weight:700;letter-spacing:-0.209px;left:436.40px;transform-origin:0 0;transform:scaleX(0.9100);">TAIL</span>
<span class="t" id="t5" style="top:1019.66px;font-size:9.5px;line-height:9.5px;color:#a3afc2;font-weight:700;letter-spacing:0.089px;left:474.70px;">MID</span>
<span class="t" id="t6" style="top:1019.66px;font-size:9.5px;line-height:9.5px;color:#a3afc2;font-weight:700;letter-spacing:-0.209px;left:512.60px;transform-origin:0 0;transform:scaleX(0.9046);">NOSE</span>
<div class="b" style="left:548px;top:1016px;width:37px;height:16.6px;background:#155dfc;border-radius:5px;"></div>
<span class="t" id="t7" style="top:1019.66px;font-size:9.5px;line-height:9.5px;color:#ffffff;font-weight:700;letter-spacing:-0.209px;left:556.70px;transform-origin:0 0;transform:scaleX(0.8413);-webkit-text-stroke:0.25px #fff;">FULL</span>
<div class="b" style="left:672px;top:1002px;width:1px;height:29px;background:#1c2638;"></div>
<span class="t" id="t8" style="top:1001.27px;font-size:9.6px;line-height:9.6px;color:#ffffff;font-weight:700;letter-spacing:0.275px;left:772.70px;transform-origin:0 0;transform:scaleX(1.1200);-webkit-text-stroke:0.65px #fff;">VIEWPORT PERSPECTIVE</span>
<span class="t" id="t9" style="top:1019.66px;font-size:9.5px;line-height:9.5px;color:#a3afc2;font-weight:700;letter-spacing:-0.209px;left:768.80px;transform-origin:0 0;transform:scaleX(0.9087);">ISO</span>
<span class="t" id="t10" style="top:1019.66px;font-size:9.5px;line-height:9.5px;color:#a3afc2;font-weight:700;letter-spacing:-0.209px;left:803.60px;transform-origin:0 0;transform:scaleX(0.9081);">TOP</span>
<span class="t" id="t11" style="top:1019.66px;font-size:9.5px;line-height:9.5px;color:#a3afc2;font-weight:700;letter-spacing:-0.209px;left:841.10px;transform-origin:0 0;transform:scaleX(0.9285);">BOTTOM</span>
<div class="b" style="left:891px;top:1016px;width:35px;height:16.6px;background:#155dfc;border-radius:5px;"></div>
<span class="t" id="t12" style="top:1019.66px;font-size:9.5px;line-height:9.5px;color:#ffffff;font-weight:700;letter-spacing:-0.209px;left:899.30px;transform-origin:0 0;transform:scaleX(0.8673);-webkit-text-stroke:0.25px #fff;">SIDE</span>
<div class="b" style="left:1014px;top:1002px;width:1px;height:29px;background:#1c2638;"></div>
<span class="t" id="t13" style="top:1001.27px;font-size:9.6px;line-height:9.6px;color:#ffffff;font-weight:700;letter-spacing:0.523px;left:1147.30px;transform-origin:0 0;transform:scaleX(1.1200);-webkit-text-stroke:0.65px #fff;">GRAPHICS VIEW</span>
<span class="t" id="t14" style="top:1019.66px;font-size:9.5px;line-height:9.5px;color:#a3afc2;font-weight:700;letter-spacing:-0.209px;left:1110.60px;transform-origin:0 0;transform:scaleX(0.9098);">TOP GRAPHICS</span>
<span class="t" id="t15" style="top:1019.66px;font-size:9.5px;line-height:9.5px;color:#a3afc2;font-weight:700;letter-spacing:-0.209px;left:1194.60px;transform-origin:0 0;transform:scaleX(0.9378);">BOTTOM GRAPHICS</span>
<div class="b" style="left:1375px;top:1002px;width:1px;height:29px;background:#1c2638;"></div>
<span class="t" id="t16" style="top:1001.27px;font-size:9.6px;line-height:9.6px;color:#ffffff;font-weight:700;letter-spacing:0.465px;left:1514.10px;transform-origin:0 0;transform:scaleX(1.1200);-webkit-text-stroke:0.65px #fff;">CONTROLS VISIBILITY</span>
<div class="b" style="left:1463.7px;top:1016px;width:72.3px;height:16.6px;background:#155dfc;border-radius:5px;"></div>
<span class="t" id="t17" style="top:1019.66px;font-size:9.5px;line-height:9.5px;color:#ffffff;font-weight:700;letter-spacing:-0.209px;left:1472.30px;transform-origin:0 0;transform:scaleX(0.9537);-webkit-text-stroke:0.25px #fff;">HIDE POINTS</span>
<svg class="b" style="left:1548.3px;top:1019.2px;" width="11.7" height="11.7" viewBox="0 0 24 24" fill="none" stroke="#a3afc2" stroke-width="2" stroke-linecap="round" stroke-linejoin="round"><path d="M2.062 12.348a1 1 0 0 1 0-.696 10.750 10.750 0 0 1 19.876 0 1 1 0 0 1 0 .696 10.750 10.750 0 0 1-19.876 0"/><circle cx="12" cy="12" r="3"/></svg>
<span class="t" id="t18" style="top:1019.66px;font-size:9.5px;line-height:9.5px;color:#a3afc2;font-weight:700;letter-spacing:-0.209px;left:1564.50px;transform-origin:0 0;transform:scaleX(0.9817);">DIMS</span>
<div class="b" style="left:1599px;top:1016px;width:27.6px;height:16.6px;background:#155dfc;border-radius:5px;"></div>
<svg class="b" style="left:1606.8px;top:1019px;" width="12" height="12" viewBox="0 0 24 24" fill="none" stroke="#ffffff" stroke-width="2" stroke-linecap="round" stroke-linejoin="round"><rect width="18" height="18" x="3" y="3" rx="2"/><path d="M3 9h18"/><path d="M3 15h18"/><path d="M9 3v18"/><path d="M15 3v18"/></svg>
<div class="b" style="left:1631px;top:1016px;width:61px;height:16.6px;background:#155dfc;border-radius:5px;"></div>
<svg class="b" style="left:1639px;top:1019px;" width="12" height="12" viewBox="0 0 24 24" fill="none" stroke="#ffffff" stroke-width="2" stroke-linecap="round" stroke-linejoin="round"><circle cx="12" cy="12" r="10"/></svg>
<span class="t" id="t19" style="top:1019.66px;font-size:9.5px;line-height:9.5px;color:#ffffff;font-weight:700;letter-spacing:-0.209px;left:1655.50px;transform-origin:0 0;transform:scaleX(0.8715);-webkit-text-stroke:0.25px #fff;">HOLES</span>
<span class="t" id="t20" style="top:1013.96px;font-size:9.5px;line-height:9.5px;color:#a3afc2;font-weight:700;letter-spacing:-0.209px;left:1787.20px;transform-origin:0 0;transform:scaleX(0.9222);">SAVE VIEW</span>
<div class="b" style="left:1848px;top:1012px;width:1px;height:13px;background:#1e3a6e;"></div>
<svg class="b" style="left:1862.6px;top:1012.8px;" width="12" height="12" viewBox="0 0 24 24" fill="none" stroke="#f2505f" stroke-width="2" stroke-linecap="round" stroke-linejoin="round"><path d="M3 12a9 9 0 1 0 9-9 9.750 9.750 0 0 0-6.740 2.740L3 8"/><path d="M3 3v5h5"/></svg>
<span class="t" id="t21" style="top:1013.96px;font-size:9.5px;line-height:9.5px;color:#f2505f;font-weight:700;letter-spacing:-0.209px;left:1879.80px;transform-origin:0 0;transform:scaleX(0.8233);">RESET</span>
<div class="b" style="left:0px;top:120px;width:420px;height:920px;background:#020618;"></div>
<div class="b" style="left:419px;top:120px;width:2px;height:920px;background:#1c2739;"></div>
<div class="b" style="left:0;top:246px;width:420px;height:730px;overflow:hidden"><div class="b" style="left:0;top:-246px;width:420px;height:1080px">
<div class="b" style="left:8px;top:100px;width:397px;height:263px;border:1px solid #1e293b;border-radius:17px;"></div>
<div class="b" style="left:21px;top:200px;width:371px;height:59px;border:1px solid #1e293b;border-radius:8px;"></div>
<div class="b" style="left:30px;top:234px;width:16px;height:16px;background:#0c1424;border:1px solid #e2e8f0;border-radius:4px;"></div>
<div class="b" style="left:287px;top:234px;width:16px;height:16px;background:#0c1424;border:1px solid #e2e8f0;border-radius:4px;"></div>
<div class="b" style="left:314.7px;top:232.1px;width:48px;height:20.8px;background:rgba(2,6,23,.4);border:1px solid #1e293b;border-radius:4.5px;"></div>
<div class="b" style="left:21px;top:263px;width:371px;height:50px;border:1px solid #1e293b;border-radius:8px;"></div>
<span class="t" id="t22" style="top:270.39px;font-size:9.7px;line-height:9.7px;color:#a9b5c7;font-weight:700;letter-spacing:-0.213px;left:30.30px;transform-origin:0 0;transform:scaleX(0.9120);-webkit-text-stroke:0.2px #a9b5c7;">THICKNESS</span>
<div class="b" style="left:30px;top:289px;width:16px;height:16px;background:#0c1424;border:1px solid #e2e8f0;border-radius:4px;"></div>
<div class="b" style="left:34.5px;top:296.4px;width:7px;height:1.2px;background:#5d6b82;"></div>
<div class="b" style="left:54px;top:295.2px;width:225px;height:4px;background:#1e293b;border-radius:2px;"></div>
<div class="b" style="left:107px;top:289px;width:12px;height:12px;background:#6f7f97;border-radius:6px;"></div>
<div class="b" style="left:287px;top:289px;width:16px;height:16px;background:#0c1424;border:1px solid #e2e8f0;border-radius:4px;"></div>
<div class="b" style="left:291.5px;top:296.5px;width:7px;height:1px;background:#63728a;"></div>
<div class="b" style="left:294.5px;top:293.5px;width:1px;height:7px;background:#63728a;"></div>
<div class="b" style="left:314.7px;top:287.1px;width:48px;height:20.8px;background:rgba(2,6,23,.4);border:1px solid #1e293b;border-radius:4.5px;"></div>
<span class="t" id="t23" style="top:294.20px;font-size:9px;line-height:9px;color:#94a3b8;font-family:'Liberation Mono',monospace;letter-spacing:0.130px;left:338.82px;transform:translateX(-50%);">0.44</span>
<span class="t" id="t24" style="top:293.68px;font-size:9px;line-height:9px;color:#cbd5e1;font-weight:700;left:366.50px;">in</span>
<div class="b" style="left:21px;top:317px;width:371px;height:0;border-top:1px dashed #1e293b"></div>
<span class="t" id="t25" style="top:329.38px;font-size:9px;line-height:9px;color:#cbd5e1;font-weight:700;letter-spacing:0.205px;left:21.00px;transform-origin:0 0;transform:scaleX(1.1000);-webkit-text-stroke:0.35px #cbd5e1;">ADVANCED SHAPE CONTROLS</span>
<div class="b" style="left:360px;top:326px;width:32px;height:16px;background:#334155;border-radius:8px;"></div>
<div class="b" style="left:364px;top:330px;width:8px;height:8px;background:#ffffff;border-radius:4px;"></div>
<div class="b" style="left:8px;top:371px;width:397px;height:34px;border:1px solid #1e293b;border-radius:17px;"></div>
<svg class="b" style="left:17px;top:380px;" width="16" height="16" viewBox="0 0 24 24" fill="none" stroke="#dbe2ec" stroke-width="1.9" stroke-linecap="round" stroke-linejoin="round"><circle cx="19" cy="5" r="2"/><circle cx="5" cy="19" r="2"/><path d="M5 17A12 12 0 0 1 17 5"/></svg>
<span class="t" id="t26" style="top:383.34px;font-size:9.4px;line-height:9.4px;color:#e9eef5;font-weight:700;letter-spacing:0.629px;left:45.00px;transform-origin:0 0;transform:scaleX(1.1000);-webkit-text-stroke:0.72px #e9eef5;">CONCAVE, KICKS, CAMBER/ROCKER, &amp; DROPS</span>
<svg class="b" style="left:384px;top:382px;" width="12" height="12" viewBox="0 0 24 24" fill="none" stroke="#97a4b7" stroke-width="2.2" stroke-linecap="round" stroke-linejoin="round"><path d="m9 18 6-6-6-6"/></svg>
<div class="b" style="left:8px;top:413px;width:397px;height:34px;border:1px solid #1e293b;border-radius:17px;"></div>
<svg class="b" style="left:17px;top:422px;" width="16" height="16" viewBox="0 0 24 24" fill="none" stroke="#dbe2ec" stroke-width="1.9" stroke-linecap="round" stroke-linejoin="round"><rect width="18" height="18" x="3" y="3" rx="2" ry="2"/><circle cx="9" cy="9" r="2"/><path d="m21 15-3.086-3.086a2 2 0 0 0-2.828 0L6 21"/></svg>
<span class="t" id="t27" style="top:425.34px;font-size:9.4px;line-height:9.4px;color:#e9eef5;font-weight:700;letter-spacing:0.799px;left:45.00px;transform-origin:0 0;transform:scaleX(1.1000);-webkit-text-stroke:0.72px #e9eef5;">DESIGN YOUR GRAPHICS (DIGITAL)</span>
<svg class="b" style="left:384px;top:424px;" width="12" height="12" viewBox="0 0 24 24" fill="none" stroke="#97a4b7" stroke-width="2.2" stroke-linecap="round" stroke-linejoin="round"><path d="m9 18 6-6-6-6"/></svg>
<div class="b" style="left:8px;top:455px;width:397px;height:34px;border:1px solid #1e293b;border-radius:17px;"></div>
<svg class="b" style="left:17px;top:464px;" width="16" height="16" viewBox="0 0 24 24" fill="none" stroke="#dbe2ec" stroke-width="1.9" stroke-linecap="round" stroke-linejoin="round"><circle cx="13.5" cy="6.5" r=".5"/><circle cx="17.5" cy="10.5" r=".5"/><circle cx="8.5" cy="7.5" r=".5"/><circle cx="6.5" cy="12.5" r=".5"/><path d="M12 2C6.5 2 2 6.5 2 12s4.5 10 10 10c.926 0 1.648-.746 1.648-1.688 0-.437-.18-.835-.437-1.125-.29-.289-.438-.652-.438-1.125a1.640 1.640 0 0 1 1.668-1.668h1.996c3.051 0 5.555-2.503 5.555-5.554C21.965 6.012 17.461 2 12 2z"/></svg>
<span class="t" id="t28" style="top:467.34px;font-size:9.4px;line-height:9.4px;color:#e9eef5;font-weight:700;letter-spacing:0.582px;left:45.00px;transform-origin:0 0;transform:scaleX(1.1000);-webkit-text-stroke:0.72px #e9eef5;">DESIGN YOUR GRAPHICS (SILKSCREEN)</span>
<svg class="b" style="left:384px;top:466px;" width="12" height="12" viewBox="0 0 24 24" fill="none" stroke="#97a4b7" stroke-width="2.2" stroke-linecap="round" stroke-linejoin="round"><path d="m9 18 6-6-6-6"/></svg>
<div class="b" style="left:8px;top:497px;width:397px;height:354px;border:1px solid #1e293b;border-radius:17px;"></div>
<div class="b" style="left:9px;top:530px;width:395px;height:1px;background:#1e293b;"></div>
<svg class="b" style="left:17px;top:506px;" width="16" height="16" viewBox="0 0 24 24" fill="none" stroke="#dbe2ec" stroke-width="1.9" stroke-linecap="round" stroke-linejoin="round"><path d="M2 20a2 2 0 0 0 2 2h16a2 2 0 0 0 2-2V8l-7 5V8l-7 5V4a2 2 0 0 0-2-2H4a2 2 0 0 0-2 2Z"/><path d="M17 18h1"/><path d="M12 18h1"/><path d="M7 18h1"/></svg>
<span class="t" id="t29" style="top:508.64px;font-size:9.4px;line-height:9.4px;color:#e9eef5;font-weight:700;letter-spacing:0.839px;left:45.00px;transform-origin:0 0;transform:scaleX(1.1000);-webkit-text-stroke:0.72px #e9eef5;">MOLD DESIGN &amp; VIEW</span>
<svg class="b" style="left:384px;top:508px;" width="12" height="12" viewBox="0 0 24 24" fill="none" stroke="#97a4b7" stroke-width="2.2" stroke-linecap="round" stroke-linejoin="round"><path d="m6 9 6 6 6-6"/></svg>
<div class="b" style="left:21px;top:539px;width:371px;height:151px;background:#0d1526;border:1px solid #1e293b;border-radius:9px;"></div>
<svg class="b" style="left:34.5px;top:553.3px;" width="11" height="11" viewBox="0 0 24 24" fill="none" stroke="#4f8ff7" stroke-width="2.2" stroke-linecap="round" stroke-linejoin="round"><path d="M2 20a2 2 0 0 0 2 2h16a2 2 0 0 0 2-2V8l-7 5V8l-7 5V4a2 2 0 0 0-2-2H4a2 2 0 0 0-2 2Z"/><path d="M17 18h1"/><path d="M12 18h1"/><path d="M7 18h1"/></svg>
<span class="t" id="t30" style="top:553.56px;font-size:9.5px;line-height:9.5px;color:#e2e8f0;font-weight:700;letter-spacing:0.119px;left:54.00px;transform-origin:0 0;transform:scaleX(1.0800);-webkit-text-stroke:0.3px #e2e8f0;">MANUFACTURING PARAMETERS</span>
<div class="b" style="left:34px;top:573px;width:345px;height:50px;border:1px solid #1e293b;border-radius:8px;"></div>
<span class="t" id="t31" style="top:580.29px;font-size:9.7px;line-height:9.7px;color:#a9b5c7;font-weight:700;letter-spacing:-0.213px;left:43.30px;transform-origin:0 0;transform:scaleX(0.9313);-webkit-text-stroke:0.2px #a9b5c7;">MOLD BORDER (FLANGE)</span>
<div class="b" style="left:43px;top:600px;width:16px;height:16px;background:#0c1424;border:1px solid #e2e8f0;border-radius:4px;"></div>
<div class="b" style="left:47.5px;top:607.4px;width:7px;height:1.2px;background:#5d6b82;"></div>
<div class="b" style="left:67px;top:606.2px;width:199px;height:4px;background:#1e293b;border-radius:2px;"></div>
<div class="b" style="left:104px;top:600px;width:12px;height:12px;background:#6f7f97;border-radius:6px;"></div>
<div class="b" style="left:274px;top:600px;width:16px;height:16px;background:#0c1424;border:1px solid #e2e8f0;border-radius:4px;"></div>
<div class="b" style="left:278.5px;top:607.5px;width:7px;height:1px;background:#63728a;"></div>
<div class="b" style="left:281.5px;top:604.5px;width:1px;height:7px;background:#63728a;"></div>
<div class="b" style="left:301.7px;top:597.1px;width:48px;height:20.8px;background:rgba(2,6,23,.4);border:1px solid #1e293b;border-radius:4.5px;"></div>
<span class="t" id="t32" style="top:604.20px;font-size:9px;line-height:9px;color:#94a3b8;font-family:'Liberation Mono',monospace;letter-spacing:0.130px;left:325.82px;transform:translateX(-50%);">1.00</span>
<span class="t" id="t33" style="top:603.68px;font-size:9px;line-height:9px;color:#cbd5e1;font-weight:700;left:353.50px;">in</span>
<div class="b" style="left:34px;top:627px;width:345px;height:50px;border:1px solid #1e293b;border-radius:8px;"></div>
<span class="t" id="t34" style="top:634.49px;font-size:9.7px;line-height:9.7px;color:#a9b5c7;font-weight:700;letter-spacing:-0.213px;left:43.00px;transform-origin:0 0;transform:scaleX(0.8939);-webkit-text-stroke:0.2px #a9b5c7;">STACK COUNT (DECKS PER PRESS)</span>
<div class="b" style="left:43px;top:654px;width:16px;height:16px;background:#0c1424;border:1px solid #e2e8f0;border-radius:4px;"></div>
<div class="b" style="left:47.5px;top:661.4px;width:7px;height:1.2px;background:#5d6b82;"></div>
<div class="b" style="left:67px;top:660.2px;width:199px;height:4px;background:#1e293b;border-radius:2px;"></div>
<div class="b" style="left:207px;top:654px;width:12px;height:12px;background:#6f7f97;border-radius:6px;"></div>
<div class="b" style="left:274px;top:654px;width:16px;height:16px;background:#0c1424;border:1px solid #e2e8f0;border-radius:4px;"></div>
<div class="b" style="left:278.5px;top:661.5px;width:7px;height:1px;background:#63728a;"></div>
<div class="b" style="left:281.5px;top:658.5px;width:1px;height:7px;background:#63728a;"></div>
<div class="b" style="left:301.7px;top:651.1px;width:48px;height:20.8px;background:rgba(2,6,23,.4);border:1px solid #1e293b;border-radius:4.5px;"></div>
<span class="t" id="t35" style="top:658.20px;font-size:9px;line-height:9px;color:#94a3b8;font-family:'Liberation Mono',monospace;letter-spacing:0.130px;left:325.82px;transform:translateX(-50%);">4.00</span>
<span class="t" id="t36" style="top:657.68px;font-size:9px;line-height:9px;color:#cbd5e1;font-weight:700;left:353.50px;">x</span>
<div class="b" style="left:21px;top:694px;width:371px;height:148px;background:#0d1526;border:1px solid #1e293b;border-radius:9px;"></div>
<span class="t" id="t37" style="top:709.43px;font-size:9.3px;line-height:9.3px;color:#c3cddb;font-weight:700;letter-spacing:0.339px;left:34.00px;transform-origin:0 0;transform:scaleX(1.0800);-webkit-text-stroke:0.3px #c3cddb;">VIEW MODE</span>
<div class="b" style="left:34px;top:725px;width:169px;height:29px;background:#1e293b;border-radius:4px;"></div>
<span class="t" id="t38" style="top:735.06px;font-size:9.5px;line-height:9.5px;color:#66758c;font-weight:700;letter-spacing:-0.209px;left:118.40px;transform:translateX(-50%) scaleX(0.9244);">FINISHED DECK</span>
<div class="b" style="left:211px;top:725px;width:168px;height:29px;background:#155dfc;border-radius:4px;"></div>
<span class="t" id="t39" style="top:735.06px;font-size:9.5px;line-height:9.5px;color:#ffffff;font-weight:700;letter-spacing:-0.209px;left:294.90px;transform:translateX(-50%) scaleX(0.9289);">MOLD ASSEMBLY</span>
<div class="b" style="left:34px;top:762px;width:169px;height:30px;background:#1e293b;border-radius:4px;"></div>
<span class="t" id="t40" style="top:772.46px;font-size:9.5px;line-height:9.5px;color:#cbd5e1;font-weight:700;letter-spacing:-0.209px;left:118.40px;transform:translateX(-50%) scaleX(0.9542);">MALE MOLD</span>
<div class="b" style="left:211px;top:762px;width:168px;height:30px;background:#1e293b;border-radius:4px;"></div>
<span class="t" id="t41" style="top:772.46px;font-size:9.5px;line-height:9.5px;color:#cbd5e1;font-weight:700;letter-spacing:-0.209px;left:294.90px;transform:translateX(-50%) scaleX(0.9278);">FEMALE MOLD</span>
<div class="b" style="left:34px;top:800px;width:169px;height:29px;background:#1e293b;border-radius:4px;"></div>
<span class="t" id="t42" style="top:810.06px;font-size:9.5px;line-height:9.5px;color:#cbd5e1;font-weight:700;letter-spacing:-0.209px;left:118.40px;transform:translateX(-50%) scaleX(0.9447);">ISO MALE</span>
<div class="b" style="left:211px;top:800px;width:168px;height:29px;background:#1e293b;border-radius:4px;"></div>
<span class="t" id="t43" style="top:810.06px;font-size:9.5px;line-height:9.5px;color:#cbd5e1;font-weight:700;letter-spacing:-0.209px;left:294.91px;transform:translateX(-50%) scaleX(0.9078);">ISO FEMALE</span>
<div class="b" style="left:8px;top:859px;width:397px;height:34px;border:1px solid #1e293b;border-radius:17px;"></div>
<svg class="b" style="left:17px;top:868px;" width="16" height="16" viewBox="0 0 24 24" fill="none" stroke="#dbe2ec" stroke-width="1.9" stroke-linecap="round" stroke-linejoin="round"><path d="M15 14c.2-1 .7-1.700 1.500-2.500 1-.900 1.500-2.200 1.500-3.500A6 6 0 0 0 6 8c0 1 .2 2.200 1.500 3.500.7.700 1.300 1.500 1.500 2.500"/><path d="M9 18h6"/><path d="M10 22h4"/></svg>
<span class="t" id="t44" style="top:871.94px;font-size:9.4px;line-height:9.4px;color:#e9eef5;font-weight:700;letter-spacing:0.668px;left:45.00px;transform-origin:0 0;transform:scaleX(1.1000);-webkit-text-stroke:0.72px #e9eef5;">SCENE &amp; LIGHTING</span>
<svg class="b" style="left:384px;top:870px;" width="12" height="12" viewBox="0 0 24 24" fill="none" stroke="#97a4b7" stroke-width="2.2" stroke-linecap="round" stroke-linejoin="round"><path d="m9 18 6-6-6-6"/></svg>
<div class="b" style="left:8px;top:901px;width:397px;height:34px;border:1px solid #1e293b;border-radius:17px;"></div>
<svg class="b" style="left:17px;top:910px;" width="16" height="16" viewBox="0 0 24 24" fill="none" stroke="#dbe2ec" stroke-width="1.9" stroke-linecap="round" stroke-linejoin="round"><path d="M4.037 4.688a.495.495 0 0 1 .651-.651l16 6.500a.5.5 0 0 1-.063.947l-6.124 1.580a2 2 0 0 0-1.438 1.435l-1.579 6.126a.5.5 0 0 1-.947.063z"/></svg>
<span class="t" id="t45" style="top:913.94px;font-size:9.4px;line-height:9.4px;color:#e9eef5;font-weight:700;letter-spacing:0.955px;left:45.00px;transform-origin:0 0;transform:scaleX(1.1000);-webkit-text-stroke:0.72px #e9eef5;">INTERFACE &amp; ANNOTATION</span>
<svg class="b" style="left:384px;top:912px;" width="12" height="12" viewBox="0 0 24 24" fill="none" stroke="#97a4b7" stroke-width="2.2" stroke-linecap="round" stroke-linejoin="round"><path d="m9 18 6-6-6-6"/></svg>
</div></div>
<div class="b" style="left:413px;top:246px;width:7px;height:730px;background:#1e293b;"></div>
<div class="b" style="left:413px;top:727.5px;width:7px;height:247px;background:#46546a;border-radius:3.5px;"></div>
<svg class="b" style="left:13px;top:134px" width="62" height="62" viewBox="0 0 62 62"><defs><linearGradient id="lgA5" gradientUnits="userSpaceOnUse" x1="4" y1="10" x2="52" y2="58"><stop offset="0" stop-color="#8acbee"/><stop offset=".3" stop-color="#5aacdf"/><stop offset="1" stop-color="#2b7cc0"/></linearGradient><linearGradient id="lgB5" gradientUnits="userSpaceOnUse" x1="24" y1="2" x2="44" y2="46"><stop offset="0" stop-color="#1a5675"/><stop offset=".5" stop-color="#103650"/><stop offset="1" stop-color="#08182a"/></linearGradient><linearGradient id="lgC5" gradientUnits="userSpaceOnUse" x1="8" y1="56" x2="58" y2="6"><stop offset="0" stop-color="#081a33"/><stop offset=".6" stop-color="#0c2a4d"/><stop offset="1" stop-color="#15507e"/></linearGradient></defs><path d="M7.35 49.45L50.75 5.3" stroke="#cdd4dc" stroke-width="8.5" stroke-linecap="round" fill="none"/><path d="M7.35 49.45L50.75 5.3" stroke="url(#lgC5)" stroke-width="5.9" stroke-linecap="round" fill="none"/><path d="M14.8 57.2L58.15 12.25" stroke="#cdd4dc" stroke-width="8.5" stroke-linecap="round" fill="none"/><path d="M14.8 57.2L58.15 12.25" stroke="url(#lgC5)" stroke-width="5.9" stroke-linecap="round" fill="none"/><path d="M40.300 12.200v5M43 10v5M48 19v5.500M50.800 16.500v5.500" stroke="#3fa2ea" stroke-width="1.300" fill="none"/><path d="M9.400 16.200L45.800 52.500" stroke="#bcc5cf" stroke-width="18.400" stroke-linecap="round" fill="none"/><path d="M9.400 16.200L45.800 52.500" stroke="#3d83ba" stroke-width="15.8" stroke-linecap="round" fill="none"/><path d="M9.400 16.200L45.800 52.500" stroke="url(#lgA5)" stroke-width="14.2" stroke-linecap="round" fill="none"/><path d="M7.300 23.200L16.500 14.700M38 54.500L46.300 47.700" stroke="#d9dfe6" stroke-width="1.100" fill="none"/><g fill="#2f7fb5"><circle cx="7" cy="23.500" r="2.200"/><circle cx="16.700" cy="14.500" r="2.200"/><circle cx="38.100" cy="54.500" r="2.200"/><circle cx="46.500" cy="47.500" r="2"/></g><g fill="#9aa3b0" stroke="#e6d9e0" stroke-width=".7"><rect x="-1.300" y="-2.600" width="2.600" height="5.200" rx="1.100" transform="translate(13.500 17.300) rotate(-45)"/><rect x="-1.300" y="-2.600" width="2.600" height="5.200" rx="1.100" transform="translate(10.200 20.600) rotate(-45)"/><rect x="-1.200" y="-2.300" width="2.400" height="4.600" rx="1" transform="translate(43.800 49.600) rotate(-45)"/><rect x="-1.200" y="-2.300" width="2.400" height="4.600" rx="1" transform="translate(40.700 52.700) rotate(-45)"/></g><path d="M12.500 40.500Q17 37.500 21 38" stroke="#2d6fe0" stroke-width="1.200" fill="none"/><path d="M21.200 .9H29L37.400 9.300V32.300H53.600L61.100 40.700V45.900H21.200Z" fill="url(#lgB5)" stroke="#cdd4dc" stroke-width="1.3" stroke-linejoin="miter"/><g stroke="#3c9fd0" stroke-width=".85" fill="none" stroke-linejoin="round"><path d="M27.400 6.800V20L29.300 21.900V32.300L24.200 37.500V41.400"/><path d="M33.600 12V33.600L25.500 41.700"/><path d="M24.800 15.600V21.900L27.400 24.500V29.700L24.800 33V35"/><path d="M30.300 17.200V21.900L31.800 23.500V31"/><path d="M28 42.700L34.500 36.500H48.300"/><path d="M33.900 42.700L37.800 38.800H44.900L47.500 41.400H53.800"/><path d="M36.500 43.600H41.500"/></g><g fill="#0e3048" stroke="#56bdec" stroke-width=".8"><circle cx="27.400" cy="6" r="1.100"/><circle cx="33.600" cy="11.200" r="1.100"/><circle cx="24.800" cy="14.800" r="1.100"/><circle cx="30.300" cy="16.400" r="1.100"/><circle cx="49.100" cy="36.500" r="1.100"/><circle cx="54.600" cy="41.400" r="1.100"/><circle cx="42.300" cy="43.600" r="1"/></g></svg>
<span class="t" id="t46" style="top:138.76px;font-size:31px;line-height:31px;color:#ffffff;font-weight:700;letter-spacing:-0.682px;left:88.50px;transform-origin:0 0;transform:scaleX(0.9531);-webkit-text-stroke:1.1px #fff;">LindzCAD - Skate</span>
<span class="t" id="t47" style="top:176.08px;font-size:11.6px;line-height:11.6px;color:#4b93fb;font-weight:700;letter-spacing:0.891px;left:88.00px;">SKATEBOARD &amp; MOLD DESIGN SOFTWARE</span>
<svg class="b" style="left:385px;top:157.2px;" width="16" height="16" viewBox="0 0 24 24" fill="none" stroke="#8ea0b8" stroke-width="2" stroke-linecap="round" stroke-linejoin="round"><path d="m9 6-6 6 6 6"/><path d="M3 12h14"/><path d="M21 19V5"/></svg>
<div class="b" style="left:12px;top:208px;width:72px;height:27px;background:#0a0b2b;border:1px solid #322f86;border-radius:6px;"></div>
<span class="t" id="t48" style="top:213.47px;font-size:9.6px;line-height:9.6px;color:#c7d2fe;font-weight:700;letter-spacing:-0.211px;left:35.30px;transform-origin:0 0;transform:scaleX(0.9584);">JOE</span>
<span class="t" id="t49" style="top:223.31px;font-size:6.6px;line-height:6.6px;color:#5a5ee0;font-weight:700;letter-spacing:0.468px;left:35.30px;">655 CR</span>
<div class="b" style="left:88px;top:208px;width:72px;height:27px;background:#334155;border-radius:6px;"></div>
<span class="t" id="t50" style="top:216.94px;font-size:10px;line-height:10px;color:#e8edf4;font-weight:700;letter-spacing:-0.021px;left:123.99px;transform:translateX(-50%);">SIGN OUT</span>
<div class="b" style="left:187px;top:207px;width:28px;height:28px;background:#0b1220;border-radius:7px;"></div>
<svg class="b" style="left:193px;top:213px;" width="16" height="16" viewBox="0 0 24 24" fill="none" stroke="#e2e8f0" stroke-width="2" stroke-linecap="round" stroke-linejoin="round"><circle cx="12" cy="12" r="10"/><path d="M9.09 9a3 3 0 0 1 5.83 1c0 2-3 3-3 3"/><path d="M12 17h.01"/></svg>
<div class="b" style="left:219px;top:207px;width:28px;height:28px;background:#0b1220;border-radius:7px;"></div>
<svg class="b" style="left:225px;top:213px;" width="16" height="16" viewBox="0 0 24 24" fill="none" stroke="#e2e8f0" stroke-width="2" stroke-linecap="round" stroke-linejoin="round"><path d="M15.2 3a2 2 0 0 1 1.4.6l3.8 3.8a2 2 0 0 1 .6 1.4V19a2 2 0 0 1-2 2H5a2 2 0 0 1-2-2V5a2 2 0 0 1 2-2z"/><path d="M17 21v-7a1 1 0 0 0-1-1H8a1 1 0 0 0-1 1v7"/><path d="M7 3v4a1 1 0 0 0 1 1h7"/></svg>
<div class="b" style="left:251px;top:207px;width:28px;height:28px;background:#0b1220;border-radius:7px;"></div>
<svg class="b" style="left:257px;top:213px;" width="16" height="16" viewBox="0 0 24 24" fill="none" stroke="#e2e8f0" stroke-width="2" stroke-linecap="round" stroke-linejoin="round"><path d="m6 14 1.5-2.9A2 2 0 0 1 9.24 10H20a2 2 0 0 1 1.94 2.5l-1.54 6a2 2 0 0 1-1.95 1.5H4a2 2 0 0 1-2-2V5a2 2 0 0 1 2-2h3.9a2 2 0 0 1 1.69.9l.81 1.2a2 2 0 0 0 1.67.9H18a2 2 0 0 1 2 2v2"/></svg>
<div class="b" style="left:283px;top:207px;width:28px;height:28px;background:#0b1220;border-radius:7px;"></div>
<svg class="b" style="left:289px;top:213px;" width="16" height="16" viewBox="0 0 24 24" fill="none" stroke="#e2e8f0" stroke-width="2" stroke-linecap="round" stroke-linejoin="round"><path d="M6 18H4a2 2 0 0 1-2-2v-5a2 2 0 0 1 2-2h16a2 2 0 0 1 2 2v5a2 2 0 0 1-2 2h-2"/><path d="M6 9V3a1 1 0 0 1 1-1h10a1 1 0 0 1 1 1v6"/><rect x="6" y="14" width="12" height="8" rx="1"/></svg>
<div class="b" style="left:315px;top:207px;width:28px;height:28px;background:#0b1220;border-radius:7px;"></div>
<svg class="b" style="left:321px;top:213px;" width="16" height="16" viewBox="0 0 24 24" fill="none" stroke="#e2e8f0" stroke-width="2" stroke-linecap="round" stroke-linejoin="round"><path d="M21 15v4a2 2 0 0 1-2 2H5a2 2 0 0 1-2-2v-4"/><path d="M7 10l5 5 5-5"/><path d="M12 15V3"/></svg>
<div class="b" style="left:347px;top:207px;width:28px;height:28px;background:#04302a;border-radius:7px;"></div>
<svg class="b" style="left:353px;top:213px;" width="16" height="16" viewBox="0 0 24 24" fill="none" stroke="#42e0a0" stroke-width="2" stroke-linecap="round" stroke-linejoin="round"><path d="M14 2v4a2 2 0 0 0 2 2h4"/><path d="M4 7V4a2 2 0 0 1 2-2h9l5 5v13a2 2 0 0 1-2 2H6a2 2 0 0 1-2-2v-1"/><path d="m5 11-3 3 3 3"/><path d="M2 14h10"/></svg>
<div class="b" style="left:379px;top:207px;width:28px;height:28px;background:#25235f;border-radius:7px;"></div>
<svg class="b" style="left:385px;top:213px;" width="16" height="16" viewBox="0 0 24 24" fill="none" stroke="#a8b4ff" stroke-width="2" stroke-linecap="round" stroke-linejoin="round"><path d="M12.83 2.18a2 2 0 0 0-1.66 0L2.6 6.08a1 1 0 0 0 0 1.83l8.58 3.91a2 2 0 0 0 1.66 0l8.58-3.9a1 1 0 0 0 0-1.83Z"/><path d="m22 17.650-9.170 4.160a2 2 0 0 1-1.660 0L2 17.650"/><path d="m22 12.650-9.170 4.160a2 2 0 0 1-1.660 0L2 12.650"/></svg>
<svg class="b" style="left:148px;top:983px;" width="16" height="16" viewBox="0 0 24 24" fill="none" stroke="#c3cad6" stroke-width="1.8" stroke-linecap="round" stroke-linejoin="round"><path d="M2.500 17a24.120 24.120 0 0 1 0-10 2 2 0 0 1 1.400-1.400 49.560 49.560 0 0 1 16.200 0A2 2 0 0 1 21.500 7a24.120 24.120 0 0 1 0 10 2 2 0 0 1-1.400 1.400 49.550 49.550 0 0 1-16.200 0A2 2 0 0 1 2.500 17"/><path d="m10 15 5-3-5-3z"/></svg>
<svg class="b" style="left:180px;top:983px;" width="16" height="16" viewBox="0 0 24 24" fill="none" stroke="#c3cad6" stroke-width="1.8" stroke-linecap="round" stroke-linejoin="round"><path d="M18 2h-3a5 5 0 0 0-5 5v3H7v4h3v8h4v-8h3l1-4h-4V7a1 1 0 0 1 1-1h3z"/></svg>
<svg class="b" style="left:212px;top:983px;" width="16" height="16" viewBox="0 0 24 24" fill="none" stroke="#c3cad6" stroke-width="1.8" stroke-linecap="round" stroke-linejoin="round"><path d="M10 13a5 5 0 0 0 7.540.540l3-3a5 5 0 0 0-7.070-7.070l-1.720 1.710"/><path d="M14 11a5 5 0 0 0-7.540-.540l-3 3a5 5 0 0 0 7.070 7.070l1.710-1.710"/></svg>
<svg class="b" style="left:244px;top:983px;" width="16" height="16" viewBox="0 0 24 24" fill="none" stroke="#c3cad6" stroke-width="1.8" stroke-linecap="round" stroke-linejoin="round"><rect width="20" height="20" x="2" y="2" rx="5" ry="5"/><path d="M16 11.370A4 4 0 1 1 12.630 8 4 4 0 0 1 16 11.370z"/><path d="M17.500 6.500h.01"/></svg>
<span class="t" id="t51" style="top:1013.50px;font-size:9.8px;line-height:9.8px;color:#a5b1c5;font-weight:700;letter-spacing:0.293px;left:99.00px;">© 2026 - LINDSAY ROGERS</span>
<div class="b" style="left:243px;top:1017.3px;width:1.6px;height:1.6px;background:#3d4a60;"></div>
<span class="t" id="t52" style="top:1013.05px;font-size:9.3px;line-height:9.3px;color:#48566c;font-family:'Liberation Mono',monospace;letter-spacing:-0.205px;left:253.50px;transform-origin:0 0;transform:scaleX(0.9186);">Build 1.0.0</span>
<div class="b" style="left:0px;top:0px;width:1920px;height:52px;background:#1f2020;"></div>
<div class="b" style="left:0px;top:40px;width:1920px;height:80px;background:#3c3c3c;border-radius:0 10px 0 0;"></div>
<div class="b" style="left:0px;top:120px;width:1920px;height:1px;background:#494b49;"></div>
<svg class="b" style="left:0px;top:0px;" width="260" height="41" viewBox="0 0 260 41" ><path d="M1 41 C7.5 41 12 36.5 12 30 L12 15 C12 9.5 15.5 6 21 6 L235 6 C240.5 6 244 9.5 244 15 L244 30 C244 36.5 248.5 41 255 41 Z" fill="#3c3c3c"/></svg>
<svg class="b" style="left:20px;top:12px" width="16" height="16" viewBox="0 0 62 62"><defs><linearGradient id="lgA6" gradientUnits="userSpaceOnUse" x1="4" y1="10" x2="52" y2="58"><stop offset="0" stop-color="#8acbee"/><stop offset=".3" stop-color="#5aacdf"/><stop offset="1" stop-color="#2b7cc0"/></linearGradient><linearGradient id="lgB6" gradientUnits="userSpaceOnUse" x1="24" y1="2" x2="44" y2="46"><stop offset="0" stop-color="#1a5675"/><stop offset=".5" stop-color="#103650"/><stop offset="1" stop-color="#08182a"/></linearGradient><linearGradient id="lgC6" gradientUnits="userSpaceOnUse" x1="8" y1="56" x2="58" y2="6"><stop offset="0" stop-color="#081a33"/><stop offset=".6" stop-color="#0c2a4d"/><stop offset="1" stop-color="#15507e"/></linearGradient></defs><path d="M7.35 49.45L50.75 5.3" stroke="#cdd4dc" stroke-width="8.5" stroke-linecap="round" fill="none"/><path d="M7.35 49.45L50.75 5.3" stroke="url(#lgC6)" stroke-width="4.1" stroke-linecap="round" fill="none"/><path d="M14.8 57.2L58.15 12.25" stroke="#cdd4dc" stroke-width="8.5" stroke-linecap="round" fill="none"/><path d="M14.8 57.2L58.15 12.25" stroke="url(#lgC6)" stroke-width="4.1" stroke-linecap="round" fill="none"/><path d="M9.400 16.200L45.800 52.500" stroke="#bcc5cf" stroke-width="18.400" stroke-linecap="round" fill="none"/><path d="M9.400 16.200L45.800 52.500" stroke="#3d83ba" stroke-width="14" stroke-linecap="round" fill="none"/><path d="M9.400 16.200L45.800 52.500" stroke="url(#lgA6)" stroke-width="14" stroke-linecap="round" fill="none"/><path d="M21.200 .9H29L37.400 9.300V32.300H53.600L61.100 40.700V45.900H21.200Z" fill="url(#lgB6)" stroke="#cdd4dc" stroke-width="2.2" stroke-linejoin="miter"/></svg>
<span class="t" id="t53" style="top:14.84px;font-size:12px;line-height:12px;color:#e3e3e3;letter-spacing:-0.028px;left:44.50px;width:168px;overflow:hidden;-webkit-mask-image:linear-gradient(90deg,#000 150px,transparent 168px);">LindzCAD - Skateboard &amp; Mold</span>
<svg class="b" style="left:223.4px;top:15.7px;" width="9.2" height="9.2" viewBox="0 0 9.2 9.2" ><path d="M1 1L8.2 8.2M8.2 1L1 8.2" stroke="#e3e3e3" stroke-width="1.5" fill="none"/></svg>
<svg class="b" style="left:258px;top:12px" width="16" height="16" viewBox="0 0 62 62"><defs><linearGradient id="lgA7" gradientUnits="userSpaceOnUse" x1="4" y1="10" x2="52" y2="58"><stop offset="0" stop-color="#8acbee"/><stop offset=".3" stop-color="#5aacdf"/><stop offset="1" stop-color="#2b7cc0"/></linearGradient><linearGradient id="lgB7" gradientUnits="userSpaceOnUse" x1="24" y1="2" x2="44" y2="46"><stop offset="0" stop-color="#1a5675"/><stop offset=".5" stop-color="#103650"/><stop offset="1" stop-color="#08182a"/></linearGradient><linearGradient id="lgC7" gradientUnits="userSpaceOnUse" x1="8" y1="56" x2="58" y2="6"><stop offset="0" stop-color="#081a33"/><stop offset=".6" stop-color="#0c2a4d"/><stop offset="1" stop-color="#15507e"/></linearGradient></defs><path d="M7.35 49.45L50.75 5.3" stroke="#cdd4dc" stroke-width="8.5" stroke-linecap="round" fill="none"/><path d="M7.35 49.45L50.75 5.3" stroke="url(#lgC7)" stroke-width="4.1" stroke-linecap="round" fill="none"/><path d="M14.8 57.2L58.15 12.25" stroke="#cdd4dc" stroke-width="8.5" stroke-linecap="round" fill="none"/><path d="M14.8 57.2L58.15 12.25" stroke="url(#lgC7)" stroke-width="4.1" stroke-linecap="round" fill="none"/><path d="M9.400 16.200L45.800 52.500" stroke="#bcc5cf" stroke-width="18.400" stroke-linecap="round" fill="none"/><path d="M9.400 16.200L45.800 52.500" stroke="#3d83ba" stroke-width="14" stroke-linecap="round" fill="none"/><path d="M9.400 16.200L45.800 52.500" stroke="url(#lgA7)" stroke-width="14" stroke-linecap="round" fill="none"/><path d="M21.200 .9H29L37.400 9.300V32.300H53.600L61.100 40.700V45.900H21.200Z" fill="url(#lgB7)" stroke="#cdd4dc" stroke-width="2.2" stroke-linejoin="miter"/></svg>
<span class="t" id="t54" style="top:14.84px;font-size:12px;line-height:12px;color:#e3e3e3;letter-spacing:-0.106px;left:281.50px;width:168px;overflow:hidden;-webkit-mask-image:linear-gradient(90deg,#000 150px,transparent 168px);">SkateboardMolds.com — Skate</span>
<svg class="b" style="left:460.9px;top:15.7px;" width="9.2" height="9.2" viewBox="0 0 9.2 9.2" ><path d="M1 1L8.2 8.2M8.2 1L1 8.2" stroke="#c7c7c7" stroke-width="1.5" fill="none"/></svg>
<div class="b" style="left:484.5px;top:13px;width:1px;height:15px;background:#4f4f4f;"></div>
<svg class="b" style="left:496px;top:12px" width="16" height="16" viewBox="0 0 62 62"><defs><linearGradient id="lgA8" gradientUnits="userSpaceOnUse" x1="4" y1="10" x2="52" y2="58"><stop offset="0" stop-color="#8acbee"/><stop offset=".3" stop-color="#5aacdf"/><stop offset="1" stop-color="#2b7cc0"/></linearGradient><linearGradient id="lgB8" gradientUnits="userSpaceOnUse" x1="24" y1="2" x2="44" y2="46"><stop offset="0" stop-color="#1a5675"/><stop offset=".5" stop-color="#103650"/><stop offset="1" stop-color="#08182a"/></linearGradient><linearGradient id="lgC8" gradientUnits="userSpaceOnUse" x1="8" y1="56" x2="58" y2="6"><stop offset="0" stop-color="#081a33"/><stop offset=".6" stop-color="#0c2a4d"/><stop offset="1" stop-color="#15507e"/></linearGradient></defs><path d="M7.35 49.45L50.75 5.3" stroke="#cdd4dc" stroke-width="8.5" stroke-linecap="round" fill="none"/><path d="M7.35 49.45L50.75 5.3" stroke="url(#lgC8)" stroke-width="4.1" stroke-linecap="round" fill="none"/><path d="M14.8 57.2L58.15 12.25" stroke="#cdd4dc" stroke-width="8.5" stroke-linecap="round" fill="none"/><path d="M14.8 57.2L58.15 12.25" stroke="url(#lgC8)" stroke-width="4.1" stroke-linecap="round" fill="none"/><path d="M9.400 16.200L45.800 52.500" stroke="#bcc5cf" stroke-width="18.400" stroke-linecap="round" fill="none"/><path d="M9.400 16.200L45.800 52.500" stroke="#3d83ba" stroke-width="14" stroke-linecap="round" fill="none"/><path d="M9.400 16.200L45.800 52.500" stroke="url(#lgA8)" stroke-width="14" stroke-linecap="round" fill="none"/><path d="M21.200 .9H29L37.400 9.300V32.300H53.600L61.100 40.700V45.900H21.200Z" fill="url(#lgB8)" stroke="#cdd4dc" stroke-width="2.2" stroke-linejoin="miter"/></svg>
<span class="t" id="t55" style="top:14.84px;font-size:12px;line-height:12px;color:#e3e3e3;letter-spacing:-0.106px;left:520.00px;width:168px;overflow:hidden;-webkit-mask-image:linear-gradient(90deg,#000 150px,transparent 168px);">SkateboardMolds.com — Skate</span>
<svg class="b" style="left:698.9px;top:15.7px;" width="9.2" height="9.2" viewBox="0 0 9.2 9.2" ><path d="M1 1L8.2 8.2M8.2 1L1 8.2" stroke="#c7c7c7" stroke-width="1.5" fill="none"/></svg>
<div class="b" style="left:722.5px;top:13px;width:1px;height:15px;background:#4f4f4f;"></div>
<svg class="b" style="left:734px;top:14px;" width="12" height="12" viewBox="0 0 12 12" ><path d="M6 0.5V11.5M0.5 6H11.5" stroke="#e3e3e3" stroke-width="1.6" fill="none"/></svg>
<div class="b" style="left:1683px;top:6px;width:82px;height:28px;background:#3c3c3c;border-radius:12px;"></div>
<svg class="b" style="left:1691.8px;top:12.9px;" width="14.2" height="14.2" viewBox="0 0 14 14" ><defs><linearGradient id="gm" x1="0" y1="0" x2="1" y2="0"><stop offset="0" stop-color="#fbbc04"/><stop offset=".3" stop-color="#f2a01a"/><stop offset=".5" stop-color="#5b7ff0"/><stop offset="1" stop-color="#3b82f6"/></linearGradient><linearGradient id="gm2" x1="0" y1="0" x2="0" y2="1"><stop offset="0" stop-color="#ea4335"/><stop offset=".42" stop-color="#ea4335" stop-opacity="0"/><stop offset=".62" stop-color="#34a853" stop-opacity="0"/><stop offset="1" stop-color="#34a853"/></linearGradient></defs><path d="M7 0C7.400 3.900 10.100 6.600 14 7C10.100 7.400 7.400 10.100 7 14C6.600 10.100 3.900 7.400 0 7C3.900 6.600 6.600 3.900 7 0Z" fill="url(#gm)"/><path d="M7 0C7.400 3.900 10.100 6.600 14 7C10.100 7.400 7.400 10.100 7 14C6.600 10.100 3.900 7.400 0 7C3.900 6.600 6.600 3.900 7 0Z" fill="url(#gm2)"/></svg>
<span class="t" id="t56" style="top:13.80px;font-size:13px;line-height:13px;color:#e3e3e3;letter-spacing:0.062px;left:1711.20px;-webkit-text-stroke:0.3px #e3e3e3;">Gemini</span>
<div class="b" style="left:1774px;top:13px;width:1px;height:15px;background:#4f4f4f;"></div>
<div class="b" style="left:1800px;top:19.5px;width:10px;height:1px;background:#e8e8e8;"></div>
<svg class="b" style="left:1845px;top:14.5px;" width="11" height="11" viewBox="0 0 11 11" ><path d="M0.5 2.5h8v8h-8zM2.5 2.5v-2h8v8h-2" stroke="#e8e8e8" stroke-width="1" fill="none"/></svg>
<svg class="b" style="left:1890.5px;top:14px;" width="12" height="12" viewBox="0 0 12 12" ><path d="M1 1L11 11M11 1L1 11" stroke="#e8e8e8" stroke-width="1.1" fill="none"/></svg>
<svg class="b" style="left:14px;top:55px;" width="16" height="16" viewBox="0 0 16 16" ><path d="M14.5 8H2.5M8 2.2L2.2 8L8 13.8" stroke="#c9c9c9" stroke-width="1.6" fill="none"/></svg>
<svg class="b" style="left:50px;top:55px;" width="16" height="16" viewBox="0 0 16 16" ><path d="M1.5 8H13.5M8 2.2L13.8 8L8 13.8" stroke="#c9c9c9" stroke-width="1.6" fill="none"/></svg>
<svg class="b" style="left:86px;top:55px;" width="16" height="16" viewBox="0 0 16 16" ><path d="M13.3 8A5.3 5.3 0 1 1 11.6 4.1" stroke="#c9c9c9" stroke-width="1.6" fill="none"/><path d="M13.8 1.6V6.2H9.2Z" fill="#c9c9c9"/></svg>
<div class="b" style="left:120px;top:46px;width:1663px;height:34px;background:#282828;border-radius:17px;"></div>
<div class="b" style="left:125px;top:51px;width:24px;height:24px;background:#3c3c3c;border-radius:12px;"></div>
<svg class="b" style="left:129.5px;top:55.5px;" width="15" height="15" viewBox="0 0 15 15" ><circle cx="7.5" cy="7.5" r="6.3" stroke="#e3e3e3" stroke-width="1.4" fill="none"/><path d="M7.5 6.8V11" stroke="#e3e3e3" stroke-width="1.5"/><circle cx="7.5" cy="4.5" r="0.95" fill="#e3e3e3"/></svg>
<span class="t" id="t57" style="top:55.85px;font-size:14px;line-height:14px;color:#ffffff;letter-spacing:0.087px;left:157.00px;">localhost:3002/app/</span>
<svg class="b" style="left:1716px;top:55px;" width="20" height="16" viewBox="0 0 20 16" ><circle cx="5" cy="8" r="3.4" stroke="#d7d7d7" stroke-width="1.6" fill="none"/><path d="M8.4 8H18V11.5M14.5 8V11" stroke="#d7d7d7" stroke-width="1.7" fill="none"/></svg>
<svg class="b" style="left:1749px;top:54px;" width="18" height="18" viewBox="0 0 18 18" ><path d="M9 1.8L11.1 6.6L16.3 7.1L12.4 10.6L13.5 15.7L9 13L4.5 15.7L5.6 10.6L1.7 7.1L6.9 6.6Z" stroke="#d7d7d7" stroke-width="1.5" fill="none" stroke-linejoin="round"/></svg>
<svg class="b" style="left:1798px;top:54px;" width="20" height="18" viewBox="0 0 20 18" ><path d="M8 14.5H1.5V2.5H15.5V6" stroke="#d7d7d7" stroke-width="1.6" fill="none"/><circle cx="12.5" cy="11" r="3" stroke="#d7d7d7" stroke-width="1.5" fill="none"/><path d="M14.8 13.3L17.5 16" stroke="#d7d7d7" stroke-width="1.6"/></svg>
<div class="b" style="left:1834.5px;top:55px;width:1px;height:16px;background:#5a5a5a;"></div>
<svg class="b" style="left:1852px;top:53px;" width="20" height="20" viewBox="0 0 20 20" ><defs><radialGradient id="av" cx=".45" cy=".45" r=".6"><stop offset="0" stop-color="#ffffff"/><stop offset=".7" stop-color="#dfe6ee"/><stop offset="1" stop-color="#a9b8c9"/></radialGradient></defs><circle cx="10" cy="10" r="10" fill="url(#av)"/><path d="M5 8q3-4 7-2q-3 0-4 3z" fill="#8a5a55" opacity=".8"/></svg>
<svg class="b" style="left:1896px;top:55px;" width="4" height="16" viewBox="0 0 4 16" ><circle cx="2" cy="2.5" r="1.5" fill="#d7d7d7"/><circle cx="2" cy="8" r="1.5" fill="#d7d7d7"/><circle cx="2" cy="13.5" r="1.5" fill="#d7d7d7"/></svg>
<svg class="b" style="left:12.5px;top:93px;" width="15" height="15" viewBox="0 0 15 15" ><g stroke="#d0d0d0" stroke-width="1.5" fill="none"><rect x="1" y="1" width="4.6" height="4.6"/><rect x="9.2" y="1" width="4.6" height="4.6"/><rect x="1" y="9.2" width="4.6" height="4.6"/><rect x="9.2" y="9.2" width="4.6" height="4.6"/></g></svg>
<div class="b" style="left:42.5px;top:92px;width:1px;height:16px;background:#5a5a5a;"></div>
<svg class="b" style="left:59px;top:94px;" width="14.5" height="11" viewBox="0 0 14.5 11" ><path d="M0 1.5V10.5H2.8V4.6L7.25 8L11.7 4.6V10.5H14.5V1.5L13 0.3L7.25 4.7L1.5 0.3Z" fill="#ea4335"/><path d="M0 1.5V10.5H2.8V3.6Z" fill="#4285f4"/><path d="M14.5 1.5V10.5H11.7V3.6Z" fill="#34a853"/><path d="M11.7 3.6L14.5 1.5C14.5 0.2 13.2-.3 12.3.4L11.7.9Z" fill="#fbbc04"/><path d="M2.8 3.6L0 1.5C0 .2 1.3-.3 2.2.4L2.8.9Z" fill="#c5221f"/></svg>
<span class="t" id="t58" style="top:93.84px;font-size:12px;line-height:12px;color:#e3e3e3;letter-spacing:-0.211px;left:80.00px;">Gmail</span>
<svg class="b" style="left:127px;top:94.5px;" width="16" height="11.2" viewBox="0 0 16 11.2" ><rect width="16" height="11.2" rx="3" fill="#ff0033"/><path d="M6.4 3.2L10.6 5.6L6.4 8Z" fill="#fff"/></svg>
<span class="t" id="t59" style="top:93.84px;font-size:12px;line-height:12px;color:#e3e3e3;letter-spacing:-0.193px;left:149.00px;">YouTube</span>
<svg class="b" style="left:212px;top:92.5px;" width="15" height="16" viewBox="0 0 15 16" ><path d="M1 5.5q0-1.5 1.5-1.5h7l-8.5 9z" fill="#34a853"/><path d="M1 13l6-6.5l3.5 3.5l-6 6h-2q-1.5 0-1.5-1.5z" fill="#4285f4"/><path d="M9.5 4l4 0v9q0 1.5-1.5 1.5h-7.500z" fill="#f1f1f1"/><path d="M7 6.500l6.500 8q-.5 1-1.500 1h-7.500z" fill="#fbbc04"/><path d="M11.200 0a3.200 3.200 0 0 1 3.200 3.200c0 2.200-3.200 5.800-3.200 5.800s-3.200-3.600-3.200-5.800a3.200 3.200 0 0 1 3.200-3.200z" fill="#ea4335"/><circle cx="11.200" cy="3.200" r="1.100" fill="#7a1a14"/></svg>
<span class="t" id="t60" style="top:93.84px;font-size:12px;line-height:12px;color:#e3e3e3;letter-spacing:-0.115px;left:233.00px;">Maps</span>
<svg class="b" style="left:279.5px;top:93px;" width="15" height="14" viewBox="0 0 15 14" ><path d="M2.500 2.500l7-2.200l1 3z" fill="#34a853"/><path d="M6 1l7 1.500l-1 3z" fill="#ea4335"/><rect x="2" y="1.500" width="10" height="6" rx="1" fill="#fbbc04"/><rect x="0" y="4.500" width="15" height="9.500" rx="1.300" fill="#4c8bf5"/><path d="M2.500 8.500h3.500v3h-3.500zM8 8h4.500M8 10h4.500M8 12h3" stroke="#fff" stroke-width="1" fill="none"/></svg>
<span class="t" id="t61" style="top:93.84px;font-size:12px;line-height:12px;color:#e3e3e3;letter-spacing:-0.264px;left:301.00px;transform-origin:0 0;transform:scaleX(0.9923);">News</span>
<svg class="b" style="left:347.5px;top:93px;" width="15" height="15" viewBox="0 0 15 15" ><rect x="4.500" y="4" width="10.500" height="11" rx="1.200" fill="#e8eaed"/><rect x="0" y="0" width="10.500" height="11" rx="1.200" fill="#4c8bf5"/><path d="M6.800 5.500H4.800M6.900 5.500A2.100 2.100 0 1 1 6.200 3.900" stroke="#fff" stroke-width="1.100" fill="none"/><path d="M9 8h4.500M11.200 7v1M12.700 8q-.8 3-3.500 4.500M10 9.500q1 2 3.200 3" stroke="#7a7f87" stroke-width=".9" fill="none"/></svg>
<span class="t" id="t62" style="top:93.84px;font-size:12px;line-height:12px;color:#e3e3e3;letter-spacing:-0.264px;left:369.00px;transform-origin:0 0;transform:scaleX(0.9796);">Translate</span>
<svg class="b" style="left:432px;top:93px;" width="15" height="15" viewBox="0 0 15 15" ><path d="M1 1.500Q1 .5 2 .9L13.500 6.300Q14.800 7 13.500 7.700L2 14Q1 14.500 1 13.500Z" fill="#2f7df6"/><path d="M2.500 9.500l3-2.500l2.500 2l4.500-3" stroke="#fff" stroke-width="1.300" fill="none"/></svg>
<span class="t" id="t63" style="top:93.84px;font-size:12px;line-height:12px;color:#e3e3e3;letter-spacing:-0.042px;left:454.00px;">Internal testing | Lin...</span>
<div class="b" style="left:1788.5px;top:92px;width:1px;height:16px;background:#5a5a5a;"></div>
<svg class="b" style="left:1805px;top:93px;" width="17" height="14" viewBox="0 0 17 14" ><path d="M1 2.200Q1 1 2.200 1H6.500L8.300 2.800H14.800Q16 2.800 16 4V11.800Q16 13 14.800 13H2.200Q1 13 1 11.800Z" stroke="#d7d7d7" stroke-width="1.400" fill="none"/></svg>
<span class="t" id="t64" style="top:93.84px;font-size:12px;line-height:12px;color:#e3e3e3;letter-spacing:-0.141px;left:1830.00px;">All Bookmarks</span>
<div class="b" style="left:0px;top:1040px;width:1920px;height:40px;background:linear-gradient(90deg,#272321 0%,#2a2624 20%,#272322 40%,#211e1d 56%,#232021 70%,#292a2e 79%,#2c2d33 85%,#27272a 91%,#222224 100%);"></div>
<svg class="b" style="left:15.5px;top:1051.5px;" width="17" height="17" viewBox="0 0 17 17" ><path d="M0 2.400L6.900 1.450V8H0ZM7.800 1.300L17 0V8H7.800ZM0 8.900H6.900V15.500L0 14.550ZM7.800 8.900H17V17L7.800 15.700Z" fill="#ffffff"/></svg>
<div class="b" style="left:48px;top:1040px;width:288px;height:40px;background:#f3f3f3;"></div>
<svg class="b" style="left:58px;top:1050px;" width="20" height="20" viewBox="0 0 20 20" ><circle cx="12.500" cy="7.500" r="5.300" stroke="#2b2b2b" stroke-width="1.500" fill="none"/><path d="M8.700 11.300L2.300 17.700" stroke="#2b2b2b" stroke-width="1.700"/></svg>
<span class="t" id="t65" style="top:1052.50px;font-size:15px;line-height:15px;color:#2f2b28;letter-spacing:-0.282px;left:88.00px;">Type here to search</span>
<svg class="b" style="left:262px;top:1040px;" width="74" height="40" viewBox="0 0 74 40" ><defs><linearGradient id="ice" x1="0" y1="0" x2="1" y2="1"><stop offset="0" stop-color="#dbe8f6"/><stop offset="1" stop-color="#b4cfea"/></linearGradient><radialGradient id="bear" cx=".35" cy=".3" r=".9"><stop offset="0" stop-color="#faf6fc"/><stop offset=".55" stop-color="#e3d8ee"/><stop offset="1" stop-color="#b5a2cc"/></radialGradient></defs><path d="M-6 40Q4 30 18 28Q30 26.500 40 27Q58 21 74 18V40Z" fill="url(#ice)"/><path d="M14 37Q26 33 40 35Q50 33 56 29L58 32Q48 38 30 39Z" fill="#8fb3d6" opacity=".55"/><g fill="url(#bear)"><rect x="50" y="17" width="6" height="14.500" rx="2.800"/><rect x="29" y="20" width="6.500" height="17" rx="3"/><ellipse cx="37.500" cy="16.500" rx="18.500" ry="10.200"/><rect x="39.500" y="20" width="6.500" height="14" rx="3"/><rect x="15.500" y="14" width="7" height="24" rx="3.300"/><circle cx="14.400" cy="4.200" r="2.300"/><circle cx="26.800" cy="4.200" r="2.300"/><ellipse cx="20.700" cy="8" rx="7.600" ry="6.200"/></g><ellipse cx="20.300" cy="10.800" rx="2.800" ry="2.200" fill="#efe8f4"/><circle cx="17.700" cy="6.700" r=".75" fill="#5a3a34"/><circle cx="23.600" cy="6.700" r=".75" fill="#5a3a34"/><ellipse cx="20.200" cy="9.700" rx="1.200" ry=".85" fill="#3a2a2c"/></svg>
<svg class="b" style="left:351.5px;top:1051.5px;" width="17" height="16" viewBox="0 0 17 16" ><g stroke="#fff" stroke-width="1.300" fill="none"><path d="M.6 3V.7H11.400V3"/><path d="M.6 13V15.300H11.400V13"/><rect x="1.400" y="4.600" width="9.200" height="6.800"/></g><rect x="14.200" y="0" width="1.500" height="3" fill="#fff"/><rect x="13.800" y="4.800" width="2.400" height="2.600" fill="#fff"/><rect x="14.200" y="9" width="1.500" height="7" fill="#fff"/></svg>
<svg class="b" style="left:400px;top:1049.5px;" width="22" height="21.5" viewBox="0 0 22 21.5" ><defs><linearGradient id="cp1" x1=".6" y1="0" x2=".3" y2="1"><stop offset="0" stop-color="#2b8ff5"/><stop offset=".45" stop-color="#27b9c6"/><stop offset=".75" stop-color="#7fd05a"/><stop offset="1" stop-color="#f7d43a"/></linearGradient><linearGradient id="cp2" x1=".6" y1="0" x2=".3" y2="1"><stop offset="0" stop-color="#5a7bf2"/><stop offset=".35" stop-color="#b05be8"/><stop offset=".7" stop-color="#ec5792"/><stop offset="1" stop-color="#f98b33"/></linearGradient></defs><path d="M12 21H8Q11.500 20 12.500 16.500L15 7.500Q16 4 13.500 2.500L17 3Q22.500 4 21 9.500L18.500 17Q17 21 12 21Z" fill="url(#cp2)"/><path d="M10 .5H14Q10.500 1.500 9.500 5L7 14Q6 17.500 8.500 19L5 18.500Q-.5 17.500 1 12L3.500 4.500Q5 .5 10 .5Z" fill="url(#cp1)"/><path d="M8.500 19Q6 17.500 7 14L8 10.500Q9.500 15 13 16Q11.500 20.500 8 21Z" fill="#f3693f"/></svg>
<svg class="b" style="left:447px;top:1048px;" width="26" height="24" viewBox="0 0 26 24" ><path d="M9 3L19 0L26 5V18L19 23L9 20Z" fill="#1490df"/><path d="M9 9H26V18L19 23L9 20Z" fill="#28a8ea"/><path d="M14 12L26 7V18Z" fill="#50d9ff" opacity=".7"/><rect x="0" y="5.500" width="14" height="14" rx="1.500" fill="#0f6cbd"/><ellipse cx="7" cy="12.500" rx="3.300" ry="4" stroke="#fff" stroke-width="1.800" fill="none"/></svg>
<svg class="b" style="left:500px;top:1047.8px;" width="18" height="24.5" viewBox="0 0 18 24.5" ><rect x="0" y="0" width="18" height="24.500" rx="1.800" fill="#79858f"/><rect x=".8" y=".8" width="16.400" height="22.900" rx="1.200" fill="#8b969f"/><rect x="2" y="2.200" width="14" height="4.800" fill="#5bd0f2"/><g fill="#e6ebf0"><rect x="2" y="8.800" width="3.600" height="3.600"/><rect x="7.200" y="8.800" width="3.600" height="3.600"/><rect x="12.400" y="8.800" width="3.600" height="3.600"/><rect x="2" y="13.800" width="3.600" height="3.600"/><rect x="7.200" y="13.800" width="3.600" height="3.600"/><rect x="2" y="18.800" width="3.600" height="3.600"/><rect x="7.200" y="18.800" width="3.600" height="3.600"/></g><rect x="12.400" y="13.800" width="3.600" height="8.600" fill="#1c4f8d"/></svg>
<svg class="b" style="left:547px;top:1050.8px;" width="21.5" height="18.5" viewBox="0 0 21.5 18.5" ><path d="M0 1.800Q0 .5 1.300 .5H6.500L8.500 2.500H20.200Q21.500 2.500 21.500 3.800V14H0Z" fill="#e9a91f"/><rect x="0" y="4" width="21.500" height="12.800" rx=".8" fill="#ffd766"/><path d="M4.500 11H17V18.500H13.500V14.500H8V18.500H4.500Z" fill="#2f8fe3"/><rect x="0" y="15.800" width="21.500" height="1.200" fill="#f0c040"/><path d="M4.500 17H8V14.500H13.500V17H17V18.500H4.500Z" fill="#2f8fe3"/></svg>
<svg class="b" style="left:594px;top:1047px;" width="26" height="26" viewBox="0 0 26 26" ><defs><radialGradient id="ff" cx=".6" cy=".25" r=".9"><stop offset="0" stop-color="#ffe226"/><stop offset=".4" stop-color="#ff9a1f"/><stop offset=".8" stop-color="#ff3b47"/><stop offset="1" stop-color="#d7147d"/></radialGradient></defs><path d="M13 3Q15 1 15.500 0Q19 3 20 6Q23 7 24.500 11Q27 20 20 24.500Q13 28 6 24Q-1 19 2 10Q3 7 5 6Q5 8 6 9Q8 4 13 3Z" fill="url(#ff)"/><circle cx="12.500" cy="14.500" r="6" fill="#7a3fd4"/><path d="M7 13Q11 9 16 11Q19 12 18 16Q15 13 11 15Q8 16 7 13Z" fill="#ff9a1f"/></svg>
<svg class="b" style="left:643px;top:1048px;" width="25" height="24" viewBox="0 0 25 24" ><rect width="25" height="24" fill="#ff00e1"/><path d="M4 3L8 9Q12.500 7 17 9L21 3L20 12Q21 17 17 20L12.500 22L8 20Q4 17 5 12ZM8 13L11 14M17 13L14 14M12.500 17V19M5 16L10 17M20 16L15 17M6 20L10 18.500M19 20L15 18.500" stroke="#1a0b18" stroke-width="1" fill="none"/></svg>
<svg class="b" style="left:692px;top:1048px;" width="25" height="25" viewBox="0 0 25 25" ><defs><linearGradient id="ed1" x1="0" y1="0" x2="1" y2="1"><stop offset="0" stop-color="#36c7e8"/><stop offset=".5" stop-color="#1b86d8"/><stop offset="1" stop-color="#0c4fa8"/></linearGradient><linearGradient id="ed2" x1="0" y1="0" x2="1" y2="0"><stop offset="0" stop-color="#2bc3d2"/><stop offset="1" stop-color="#6fe06a"/></linearGradient></defs><circle cx="12.500" cy="12.500" r="12.300" fill="url(#ed1)"/><path d="M1 10Q4 0 13 .3Q23 1 24.500 10Q25 15 20 16H13Q15 13 12 11Q7 9 4 14Q2 18 4 21Q0 17 1 10Z" fill="url(#ed2)"/><path d="M9 13Q7 20 14 24Q8 25 5 20Q3 15 7 12Q8 11.500 9 13Z" fill="#0b3f8f"/></svg>
<div class="b" style="left:730px;top:1040px;width:48px;height:40px;background:#565351;"></div>
<svg class="b" style="left:741.5px;top:1048px;" width="24" height="24" viewBox="0 0 24 24" ><g transform="translate(12 12)"><path d="M0 0L-10.390 -6A12 12 0 0 1 10.390 -6Z" fill="#ea4335"/><path d="M0 0L10.390 -6A12 12 0 0 1 0 12Z" fill="#fbbc04"/><path d="M0 0L0 12A12 12 0 0 1 -10.390 -6Z" fill="#34a853"/><path d="M-10.390 -6A12 12 0 0 1 10.390 -6L0 -6Z" fill="#ea4335"/><circle r="5.600" fill="#fff"/><circle r="4.400" fill="#4285f4"/></g></svg>
<svg class="b" style="left:790px;top:1047px;" width="26" height="26" viewBox="0 0 26 26" ><defs><linearGradient id="np" x1="0" y1="1" x2="1" y2="0"><stop offset="0" stop-color="#3a9fb2"/><stop offset=".45" stop-color="#9fd3df"/><stop offset="1" stop-color="#dff1f6"/></linearGradient></defs><path d="M9 3L22.500 5L19 24L1.500 19Z" fill="url(#np)"/><path d="M9 3L22.500 5L22 7.500L8.300 5.500Z" fill="#eef8fb"/><path d="M22.500 5L24 7L20.500 24.500L19 24Z" fill="#cdb56e"/><path d="M1.500 19L19 24L20.500 24.500L3 20.500Z" fill="#2d8ea2"/></svg>
<svg class="b" style="left:839px;top:1048px;" width="25" height="25" viewBox="0 0 25 25" ><circle cx="12.500" cy="12.500" r="12.500" fill="#fff"/><g transform="translate(12.600 12.600) scale(1.220) translate(-12.700 -12.600)"><path d="M19.500 12.700q0-.8-.1-1.400H12.700v2.700h3.800q-.3 1.400-1.400 2.100l2.200 1.700q2.200-1.900 2.200-5.100z" fill="#4285f4"/><path d="M12.700 19.600q2.800 0 4.600-1.800l-2.200-1.700q-1 .7-2.400.7q-2.600 0-3.600-2.500l-2.300 1.800q1.700 3.500 5.900 3.500z" fill="#34a853"/><path d="M9.100 14.300q-.5-1.600 0-3.200L6.800 9.300q-1.500 3.100 0 6.800z" fill="#fbbc04"/><path d="M12.700 8.400q1.500 0 2.600 1l2-2q-1.900-1.800-4.600-1.800q-4.200 0-5.900 3.700l2.300 1.800q1-2.700 3.600-2.700z" fill="#ea4335"/></g></svg>
<svg class="b" style="left:889px;top:1048px;" width="24" height="23.5" viewBox="0 0 24 23.5" ><defs><linearGradient id="aa" x1="0" y1="0" x2="0" y2="1"><stop offset="0" stop-color="#e8503c"/><stop offset=".22" stop-color="#9bc04a"/><stop offset=".45" stop-color="#2fae8e"/><stop offset=".7" stop-color="#2f86ee"/><stop offset="1" stop-color="#2b6fe8"/></linearGradient></defs><rect width="24" height="23.500" rx="1.500" fill="#1f2229"/><path d="M12 4Q14 5 15.500 10Q17 15.500 20.500 19.500Q17 18.500 14.800 14.500Q13 11 12 10.500Q11 11 9.200 14.500Q7 18.500 3.500 19.500Q7 15.500 8.500 10Q10 5 12 4Z" fill="url(#aa)"/></svg>
<svg class="b" style="left:938px;top:1048px;" width="24" height="24" viewBox="0 0 24 24" ><g transform="translate(12 12)"><path d="M0 0L-10.390 -6A12 12 0 0 1 10.390 -6Z" fill="#ea4335"/><path d="M0 0L10.390 -6A12 12 0 0 1 0 12Z" fill="#fbbc04"/><path d="M0 0L0 12A12 12 0 0 1 -10.390 -6Z" fill="#34a853"/><path d="M-10.390 -6A12 12 0 0 1 10.390 -6L0 -6Z" fill="#ea4335"/><circle r="5.600" fill="#fff"/><circle r="4.400" fill="#4285f4"/></g></svg>
<svg class="b" style="left:985px;top:1046px;" width="28" height="28" viewBox="0 0 28 28" ><path d="M2.500 15.500Q2 8 11 6.500Q20 5.500 22.500 11.500Q23.500 16.500 19 17Q16 17.200 16.500 20Q17 24.500 11 24Q3.500 23 2.500 15.500Z" fill="#a9c9e8" stroke="#6f94bd" stroke-width=".8"/><circle cx="7.500" cy="12.500" r="1.900" fill="#e2493a"/><circle cx="12.500" cy="9.500" r="1.900" fill="#58b55a"/><circle cx="17.500" cy="10" r="1.800" fill="#f2b233"/><circle cx="7.500" cy="18.500" r="1.900" fill="#e9eef4"/><ellipse cx="12.500" cy="16" rx="1.500" ry="1.800" fill="#3d4f66"/><path d="M23.500 3.500L25 4.500L16 23.500L14 25L14.500 22.500Z" fill="#e08a2c"/><path d="M22 1.500Q24 0 26 2L25 5L23 4Z" fill="#d9b98a"/></svg>
<div class="b" style="left:489.5px;top:1078px;width:39.5px;height:2px;background:#8fc3ee;"></div>
<div class="b" style="left:538px;top:1078px;width:40px;height:2px;background:#8fc3ee;"></div>
<div class="b" style="left:587px;top:1078px;width:40px;height:2px;background:#8fc3ee;"></div>
<div class="b" style="left:730px;top:1078px;width:48px;height:2px;background:#8fc3ee;"></div>
<div class="b" style="left:782.5px;top:1078px;width:40.5px;height:2px;background:#8fc3ee;"></div>
<div class="b" style="left:881px;top:1078px;width:39.5px;height:2px;background:#8fc3ee;"></div>
<div class="b" style="left:930px;top:1078px;width:39.7px;height:2px;background:#8fc3ee;"></div>
<div class="b" style="left:978.5px;top:1078px;width:39.5px;height:2px;background:#8fc3ee;"></div>
<svg class="b" style="left:1565.7px;top:1048.75px;" width="23" height="23" viewBox="0 0 23 23" ><defs><linearGradient id="mn" x1="0" y1="0" x2="0" y2="1"><stop offset="0" stop-color="#f9c23c"/><stop offset=".5" stop-color="#f6a82c"/><stop offset="1" stop-color="#f0801f"/></linearGradient></defs><path d="M15.2 .3A11.2 11.2 0 1 1 .2 14.65A10.52 10.52 0 0 0 15.2 .3Z" fill="url(#mn)"/></svg>
<span class="t" id="t66" style="top:1053.15px;font-size:14px;line-height:14px;color:#ffffff;letter-spacing:-0.308px;left:1597.20px;transform-origin:0 0;transform:scaleX(0.9302);">81°F</span>
<span class="t" id="t67" style="top:1053.15px;font-size:14px;line-height:14px;color:#ffffff;letter-spacing:-0.308px;left:1633.10px;transform-origin:0 0;transform:scaleX(0.9709);">Clear</span>
<svg class="b" style="left:1688px;top:1055px;" width="14" height="9" viewBox="0 0 14 9" ><path d="M1 8L7 1.500L13 8" stroke="#fff" stroke-width="1.500" fill="none"/></svg>
<svg class="b" style="left:1713.3px;top:1052px;" width="12.2" height="16.5" viewBox="0 0 14 19" ><path d="M3.500 1.500Q7 0 10.500 1.500M3.500 17.500Q7 19 10.500 17.500" stroke="#fff" stroke-width="1" fill="none"/><rect x=".7" y="5.500" width="8.600" height="8" rx="1.500" stroke="#fff" stroke-width="1.300" fill="none"/><path d="M9.500 8.500L13 6.500V12.500L9.500 10.500" stroke="#fff" stroke-width="1.200" fill="none"/></svg>
<svg class="b" style="left:1733px;top:1052px;" width="20" height="17" viewBox="0 0 20 17" ><path d="M4.500 11.500Q.5 11.500 .8 8Q1.200 5 4.500 5.300Q6 1 10 2.500Q12.500 3.500 12.500 6Q16 5.500 16 9Q16 11.500 13.500 11.500Z" fill="#c9cdd3"/><circle cx="13.800" cy="11.500" r="4.200" fill="#1683e0"/><path d="M13.800 10.500V14" stroke="#fff" stroke-width="1.200"/><circle cx="13.800" cy="9" r=".7" fill="#fff"/></svg>
<svg class="b" style="left:1758px;top:1052px;" width="17" height="16" viewBox="0 0 17 16" ><path d="M1 5.500H4L8 2V14L4 10.500H1Z" stroke="#fff" stroke-width="1.200" fill="none" stroke-linejoin="round"/><path d="M10.500 5.500Q12 8 10.500 10.500M12.500 3.500Q15 8 12.500 12.500" stroke="#fff" stroke-width="1.100" fill="none"/><path d="M14.500 1.800Q17.800 8 14.500 14.200" stroke="#8c8c8c" stroke-width="1" fill="none"/></svg>
<svg class="b" style="left:1785px;top:1053px;" width="15" height="14" viewBox="0 0 15 14" ><path d="M1 13A12 12 0 0 1 13 1" stroke="#fff" stroke-width="1.200" fill="none"/><path d="M4.500 13A8.500 8.500 0 0 1 13 4.500" stroke="#fff" stroke-width="1.200" fill="none"/><path d="M8 13A5 5 0 0 1 13 8" stroke="#fff" stroke-width="1.200" fill="none"/><circle cx="12.500" cy="12.500" r="1.300" fill="#fff"/></svg>
<span class="t" id="t68" style="top:1045.34px;font-size:12px;line-height:12px;color:#ffffff;letter-spacing:-0.264px;left:1814.20px;transform-origin:0 0;transform:scaleX(0.9624);">8:44 PM</span>
<span class="t" id="t69" style="top:1062.84px;font-size:12px;line-height:12px;color:#ffffff;letter-spacing:-0.111px;left:1808.80px;">2/27/2026</span>
<svg class="b" style="left:1879px;top:1051.5px;" width="18" height="16" viewBox="0 0 18 16" ><path d="M.5 .5H16.500V11.500H6.500L3 15V11.500H.5Z" fill="#fff"/><path d="M3 3.500H14M3 6H14M3 8.500H14" stroke="#2b2b2d" stroke-width="1"/></svg>
<div class="b" style="left:1886.5px;top:1059.5px;width:16px;height:16px;background:#2b2b2d;border:1px solid #9a9a9a;border-radius:8px;"></div>
<span class="t" id="t70" style="top:1062.84px;font-size:10px;line-height:10px;color:#ffffff;font-weight:700;left:1894.50px;transform:translateX(-50%);">2</span>
<div class="b" style="left:1915.5px;top:1040px;width:1px;height:40px;background:#5a5a5c;"></div>
</div></body></html>
